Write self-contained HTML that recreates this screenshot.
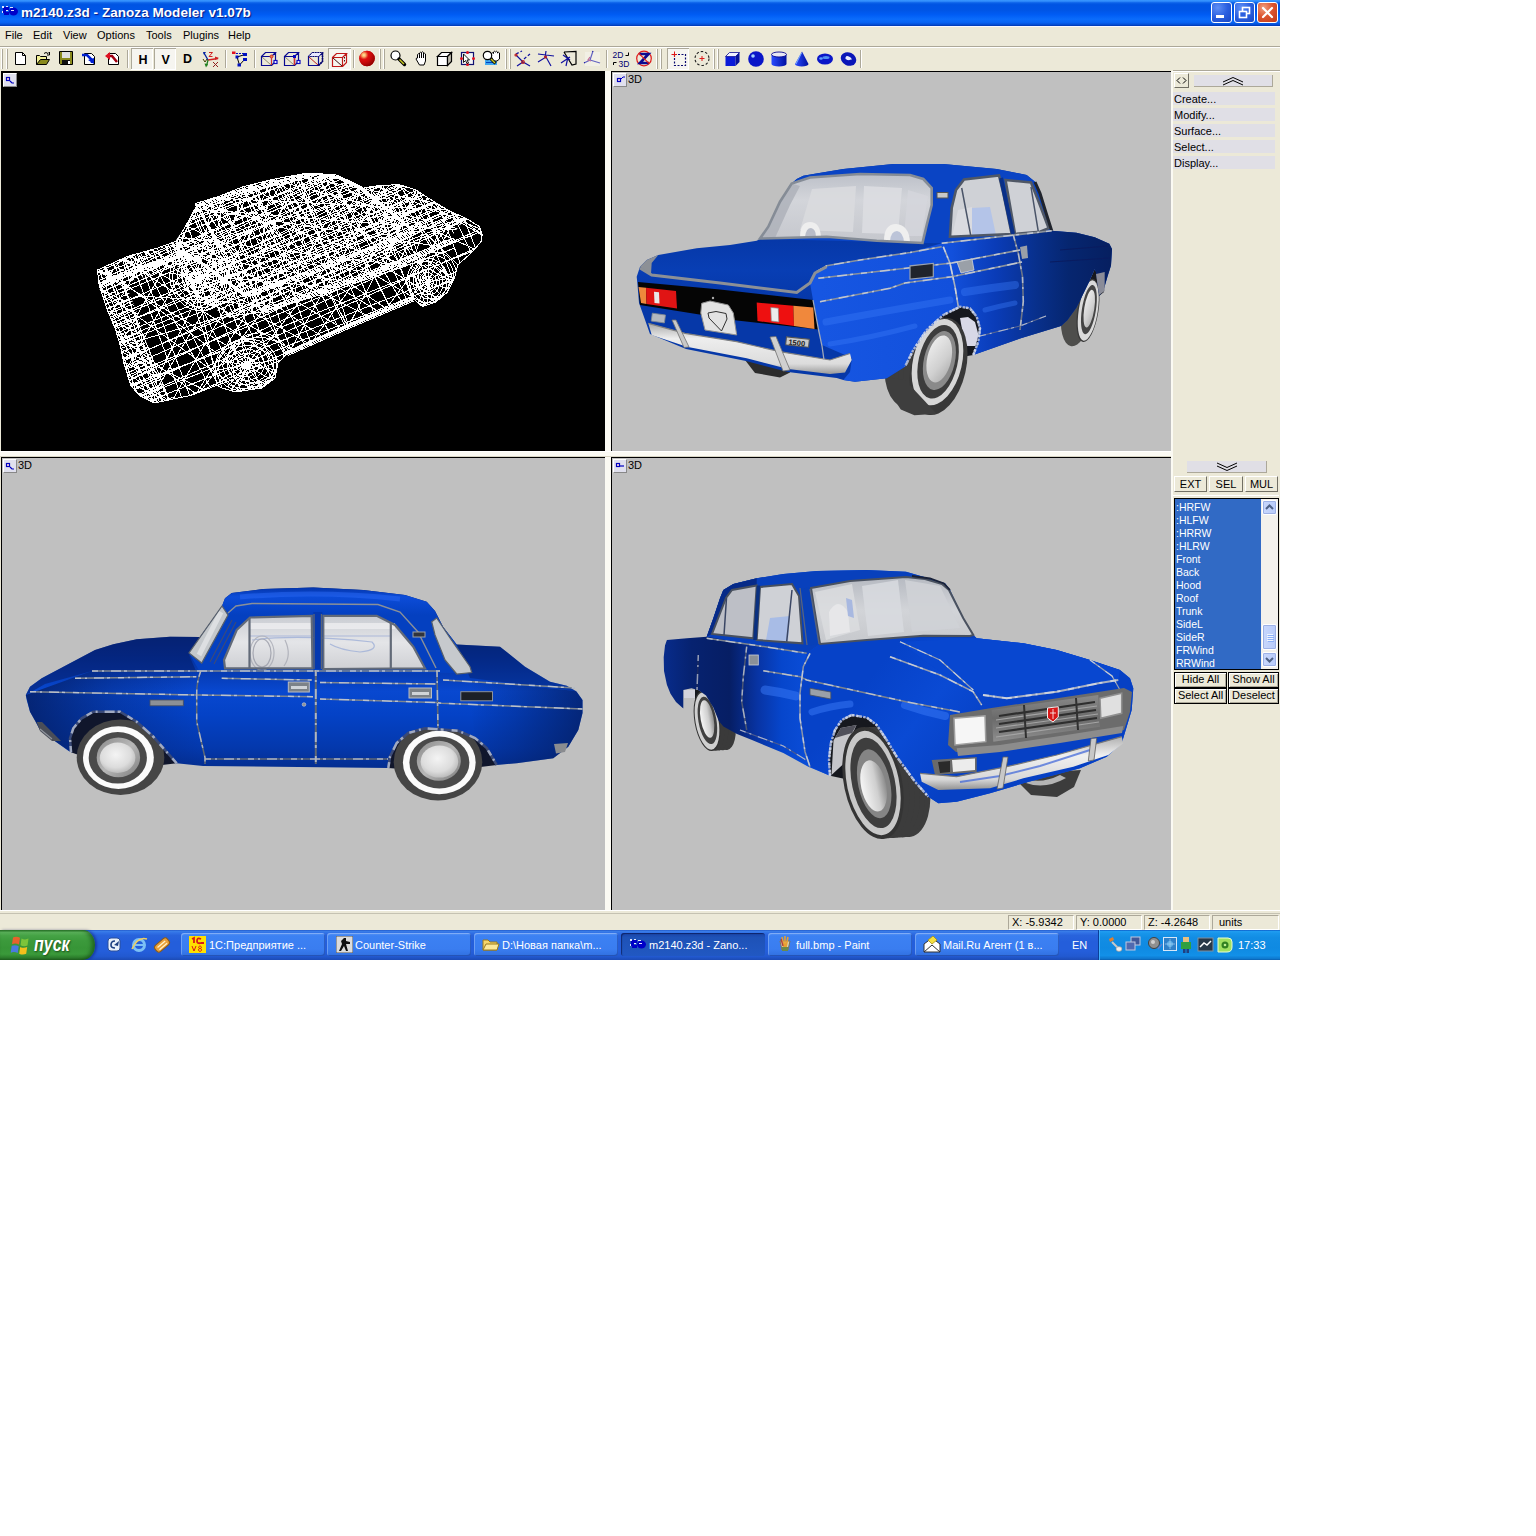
<!DOCTYPE html>
<html><head><meta charset="utf-8"><title>m2140.z3d - Zanoza Modeler v1.07b</title>
<style>
html,body{margin:0;padding:0;background:#fff;}
body{width:1536px;height:1536px;position:relative;overflow:hidden;font-family:"Liberation Sans",sans-serif;font-size:11px;color:#000;}
#win{position:absolute;left:0;top:0;width:1280px;height:960px;background:#ece9d8;overflow:hidden;}
.abs{position:absolute;}
#title{position:absolute;left:0;top:0;width:1280px;height:26px;background:linear-gradient(180deg,#3a98ff 0%,#2f8afa 5%,#0a60e8 11%,#0054e3 18%,#0055e6 40%,#005cf4 56%,#0a6cfc 74%,#0864f4 86%,#0450d8 94%,#0036b0 100%);}
#title .t{position:absolute;left:21px;top:5px;font-family:"Liberation Sans",sans-serif;font-weight:bold;font-size:13.5px;line-height:16px;color:#fff;text-shadow:1px 1px 1px #0a1883;white-space:nowrap;letter-spacing:0.05px;}
.cb{position:absolute;top:2px;width:19px;height:19px;border:1px solid #fff;border-radius:3px;background:radial-gradient(circle at 30% 25%,#5e8ff5 0%,#2a5fe0 50%,#1847c4 100%);}
.cb.x{background:radial-gradient(circle at 30% 25%,#f0a080 0%,#dd5530 45%,#c03a18 100%);}
#menu{position:absolute;left:0;top:26px;width:1280px;height:20px;background:#ece9d8;}
#menu span{position:absolute;top:3px;font-size:11px;white-space:nowrap;}
.vp{position:absolute;background:#c0c0c0;border-left:1px solid #000;border-top:1px solid #000;box-sizing:border-box;overflow:hidden;}
.vpb{position:absolute;width:14px;height:14px;background:#e0e0ee;border-top:1px solid #fff;border-left:1px solid #fff;border-right:1px solid #888;border-bottom:1px solid #888;box-sizing:border-box;}
.lbl3d{position:absolute;font-size:11px;line-height:11px;}
.pitem{position:absolute;left:1173px;width:102px;height:13px;background:#e0dfe6;font-size:11px;line-height:14px;padding-left:1px;box-sizing:border-box;}
.btn{position:absolute;height:16px;box-sizing:border-box;border:1px solid;border-color:#fff #716f64 #716f64 #fff;background:#ece9d8;font-size:11px;line-height:14px;text-align:center;}
.btn2{position:absolute;height:16px;box-sizing:border-box;border:1px solid #000;background:#ece9d8;font-size:11px;line-height:13px;text-align:center;box-shadow:inset 1px 1px 0 #fff,inset -1px -1px 0 #aca899;}
.li{position:absolute;left:1px;color:#fff;font-size:10.5px;line-height:13px;white-space:nowrap;}
.sp{position:absolute;top:915px;height:15px;box-sizing:border-box;border:1px solid;border-color:#aca899 #fff #fff #aca899;font-size:11px;line-height:13px;padding-left:3px;}
#task{position:absolute;left:0;top:930px;width:1280px;height:30px;background:linear-gradient(180deg,#1f56c8 0%,#3a7ee8 4%,#3272e6 9%,#2863dc 18%,#245edb 40%,#245edb 70%,#2259d0 88%,#1c4bb5 100%);}
.tb{position:absolute;top:3px;height:23px;width:144px;border-radius:3px;background:linear-gradient(180deg,#5a95f5 0%,#3c81f3 12%,#3a7df0 70%,#3070e0 100%);box-shadow:inset 1px 1px 0 rgba(255,255,255,.25),inset -1px -1px 0 rgba(0,0,60,.25);color:#fff;font-size:11px;line-height:23px;white-space:nowrap;overflow:hidden;}
.tb span{position:absolute;left:28px;top:1px;}
.tb.act{background:linear-gradient(180deg,#1a44a8 0%,#1e52b7 20%,#2158c2 100%);box-shadow:inset 1px 1px 1px rgba(0,0,40,.5);}
</style></head><body>
<div id="win">
<div id="title">
<svg class="abs" style="left:2px;top:5px" width="17" height="14" viewBox="0 0 17 14"><g fill="#0000c8"><rect x="1" y="2" width="6" height="3"/><rect x="1" y="4" width="3" height="4"/><rect x="2" y="7" width="5" height="3"/><ellipse cx="11.5" cy="6.5" rx="4.5" ry="4"/></g><g fill="#dfe6ff"><rect x="0" y="1" width="2" height="2"/><rect x="4" y="1" width="2" height="1"/><rect x="0" y="6" width="1" height="2"/><rect x="8" y="2" width="3" height="1"/><rect x="9" y="5" width="3" height="1"/><rect x="4" y="5" width="2" height="1"/></g></svg>
<div class="t">m2140.z3d - Zanoza Modeler v1.07b</div>
<div class="cb" style="left:1211px"><div class="abs" style="left:4px;top:12px;width:8px;height:3px;background:#fff"></div></div>
<div class="cb" style="left:1234px"><svg class="abs" style="left:0;top:0" width="19" height="19"><rect x="7.5" y="4.5" width="7" height="6" fill="none" stroke="#fff" stroke-width="1.6"/><rect x="4.5" y="8.5" width="7" height="6" fill="#2a5fe0" stroke="#fff" stroke-width="1.6"/></svg></div>
<div class="cb x" style="left:1257px"><svg class="abs" style="left:0;top:0" width="19" height="19"><path d="M5 5 L14 14 M14 5 L5 14" stroke="#fff" stroke-width="2.2" stroke-linecap="round"/></svg></div>
</div>
<div id="menu">
<span style="left:5px">File</span><span style="left:33px">Edit</span><span style="left:63px">View</span><span style="left:97px">Options</span><span style="left:146px">Tools</span><span style="left:183px">Plugins</span><span style="left:228px">Help</span>
</div>
<div class="abs" style="left:0;top:46px;width:1280px;height:1px;background:#aca899"></div>
<div class="abs" style="left:0;top:47px;width:1280px;height:1px;background:#fff"></div>
<!-- viewports -->
<div class="abs" style="left:605px;top:71px;width:6px;height:840px;background:#fbfaf3"></div>
<div class="abs" style="left:0;top:451px;width:1172px;height:6px;background:#fbfaf3"></div>
<div class="abs" style="left:0;top:451px;width:1172px;height:1px;background:#fff"></div>
<div class="abs" style="left:0;top:456px;width:1172px;height:1px;background:#d8d5c4"></div>
<div class="abs" style="left:1171px;top:71px;width:2px;height:840px;background:#fbfaf3"></div>
<div class="abs" style="left:1px;top:71px;width:604px;height:380px;background:#000"></div>
<div class="vp" style="left:611px;top:71px;width:560px;height:380px"></div>
<div class="vp" style="left:1px;top:457px;width:604px;height:453px"></div>
<div class="vp" style="left:611px;top:457px;width:560px;height:453px"></div>
<div class="vpb" style="left:3px;top:73px"><svg width="12" height="12" class="abs" style="left:0;top:0"><rect x="2.5" y="3.5" width="3" height="3" fill="#fdd" stroke="#0000c0" stroke-width="1.2"/><path d="M6 7 L8 9 H10" stroke="#0000c0" stroke-width="1.2" fill="none"/></svg></div>
<div class="vpb" style="left:613px;top:73px"><svg width="12" height="12" class="abs" style="left:0;top:0"><rect x="3.5" y="4.5" width="3" height="3" fill="#fdd" stroke="#0000c0" stroke-width="1.2"/><path d="M7 5 L9 3 H11" stroke="#0000c0" stroke-width="1" fill="none"/></svg></div>
<div class="lbl3d" style="left:628px;top:74px">3D</div>
<div class="vpb" style="left:3px;top:459px"><svg width="12" height="12" class="abs" style="left:0;top:0"><rect x="2.5" y="3.5" width="3" height="3" fill="#fdd" stroke="#0000c0" stroke-width="1.2"/><path d="M6 7 L8 9 H10" stroke="#0000c0" stroke-width="1.2" fill="none"/></svg></div>
<div class="lbl3d" style="left:18px;top:460px">3D</div>
<div class="vpb" style="left:613px;top:459px"><svg width="12" height="12" class="abs" style="left:0;top:0"><rect x="2.5" y="3.5" width="3" height="3" fill="#fdd" stroke="#0000c0" stroke-width="1.2"/><path d="M6 6 H10" stroke="#0000c0" stroke-width="1.2" fill="none"/></svg></div>
<div class="lbl3d" style="left:628px;top:460px">3D</div>
<!-- bottom -->
<div class="abs" style="left:0;top:910px;width:1280px;height:1px;background:#fff"></div>
<div class="abs" style="left:0;top:913px;width:1280px;height:1px;background:#c5c2b2"></div>
<div class="sp" style="left:1008px;width:66px">X: -5.9342</div>
<div class="sp" style="left:1076px;width:66px">Y: 0.0000</div>
<div class="sp" style="left:1144px;width:66px">Z: -4.2648</div>
<div class="sp" style="left:1212px;width:67px;padding-left:6px">units</div>
<div class="abs" style="left:0;top:26px;width:1280px;height:1px;background:#f8f8ff"></div>
<!-- toolbar -->
<svg class="abs" style="left:0;top:47px" width="870" height="24" viewBox="0 47 870 24" shape-rendering="crispEdges">
<g stroke-width="1">
<!-- grippers & separators -->
<path d="M1.500 49 V69 M6.500 49 V69" stroke="#fff"/><path d="M2.500 49 V69 M7.500 49 V69" stroke="#aca899"/>
<path d="M127.500 50 V68 M225.500 50 V68 M254.500 50 V68 M353.500 50 V68 M971.500 50 V68" stroke="#aca899"/><path d="M128.500 50 V68 M226.500 50 V68 M255.500 50 V68 M354.500 50 V68" stroke="#fff"/>
<path d="M380.500 49 V69 M384.500 49 V69 M506.500 49 V69 M510.500 49 V69 M657.500 49 V69 M661.500 49 V69 M714.500 49 V69 M718.500 49 V69" stroke="#aca899"/><path d="M379.500 49 V69 M383.500 49 V69 M505.500 49 V69 M509.500 49 V69 M656.500 49 V69 M660.500 49 V69 M713.500 49 V69 M717.500 49 V69" stroke="#fff"/>
<path d="M606.500 50 V68 M860.500 50 V68" stroke="#aca899"/><path d="M607.500 50 V68 M861.500 50 V68" stroke="#fff"/>
<!-- pressed buttons -->
<g fill="#f6f5f0"><rect x="131" y="48" width="22" height="22"/><rect x="154" y="48" width="22" height="22"/><rect x="328" y="48" width="23" height="22"/><rect x="667" y="48" width="22" height="22"/></g>
<path d="M131.500 70 V48.500 H153 M154.500 70 V48.500 H176 M328.500 70 V48.500 H351 M667.500 70 V48.500 H689" stroke="#aca899" fill="none"/>
<path d="M131 69.500 H152.500 V49 M154 69.500 H175.500 V49 M328 69.500 H350.500 V49 M667 69.500 H688.500 V49" stroke="#fff" fill="none"/>
</g>
<g shape-rendering="auto">
<!-- new -->
<path d="M15.500 52.500 H22.500 L25.500 55.500 V64.500 H15.500 Z" fill="#fff" stroke="#000"/><path d="M22.500 52.500 V55.500 H25.500" fill="none" stroke="#000"/>
<!-- open -->
<path d="M36.500 64.500 V55.500 H39.500 L40.500 56.500 H46.500 V59.500" fill="#f1ef96" stroke="#000"/><path d="M36.500 64.500 L40.500 59.500 H49.500 L46.500 64.500 Z" fill="#8a8a1e" stroke="#000"/><path d="M44 53.500 Q46 51.500 48 53.500 L49.500 52 M49.500 52 V55 H47" fill="none" stroke="#000"/>
<!-- save -->
<path d="M59.500 51.500 H72.500 V64.500 H60.500 L59.500 63.500 Z" fill="#8a8a1e" stroke="#000"/><rect x="62" y="52" width="8" height="6" fill="#e0e0e0"/><rect x="62" y="60" width="8" height="4" fill="#111"/><rect x="68" y="61" width="2" height="3" fill="#fff"/>
<!-- import -->
<path d="M84.500 53.500 H91.500 L94.500 56.500 V64.500 H84.500 Z" fill="#fff" stroke="#000"/><path d="M82 55 H87 L92 60 V63" fill="none" stroke="#0020d0" stroke-width="2.600"/><path d="M88 60 L94 64 V58 Z" fill="#0020d0"/>
<!-- export -->
<path d="M108.500 53.500 H115.500 L118.500 56.500 V64.500 H108.500 Z" fill="#fff" stroke="#000"/><path d="M117 62 L112 56 H108" fill="none" stroke="#a00010" stroke-width="2.600"/><path d="M105 56 L110 52 V60 Z" fill="#e01020"/>
<!-- H V D -->
<text x="138.500" y="64" font-family="Liberation Sans,sans-serif" font-weight="bold" font-size="12.500">H</text>
<text x="161.500" y="64" font-family="Liberation Sans,sans-serif" font-weight="bold" font-size="12.500">V</text>
<text x="183" y="63" font-family="Liberation Sans,sans-serif" font-weight="bold" font-size="12.500">D</text>
<!-- axes -->
<path d="M208 60 L204 53" stroke="#0020a0" stroke-width="1.300"/><path d="M203 52 l3 0 l-2 3z" fill="#0020a0"/>
<path d="M208 60 L218 58.500" stroke="#d02020" stroke-width="1.300"/><path d="M219 58 l-4 -1.500 l0 3.500z" fill="#d02020"/>
<path d="M208 60 L206.500 66" stroke="#208020" stroke-width="1.300"/><path d="M206 67.500 l-1.500 -4 l3.500 0.500z" fill="#208020"/>
<path d="M209 52.500 h3.500 l-3.500 4 h3.500" stroke="#d02020" fill="none" stroke-width="1"/><path d="M203 59 l2 3 l2 -3" stroke="#404000" fill="none"/><path d="M213 62 l5 5 M218 62 l-5 5" stroke="#902020"/>
<!-- select icon -->
<rect x="232" y="51.500" width="3.500" height="2.500" fill="#e01020"/><path d="M236 53.500 H243" stroke="#0010c0" stroke-dasharray="2 1"/>
<path d="M237 57 L245 54.500 M237 57 L239.500 65 M239.500 65 L245 59" stroke="#000" fill="none"/>
<g fill="#0010c0"><rect x="243" y="53" width="4" height="3"/><rect x="235.500" y="55.500" width="3" height="3"/><rect x="243" y="58" width="4" height="3"/><rect x="237.500" y="63.500" width="3.500" height="3"/></g>
<!-- cubes -->
<g fill="none" stroke="#0a0a90" stroke-width="1.200">
<path d="M261.500 56.500 H271.500 V65.500 H261.500 Z M261.500 56.500 L265.500 52.500 H275.500 L271.500 56.500 M275.500 52.500 V61.500 L271.500 65.500"/>
<path d="M284.500 56.500 H294.500 V65.500 H284.500 Z M284.500 56.500 L288.500 52.500 H298.500 L294.500 56.500 M298.500 52.500 V61.500 L294.500 65.500"/>
<path d="M308.500 56.500 H318.500 V65.500 H308.500 Z M308.500 56.500 L312.500 52.500 H322.500 L318.500 56.500 M322.500 52.500 V61.500 L318.500 65.500" stroke-dasharray="none"/>
</g>
<path d="M262 57 L271 65" stroke="#909070"/><path d="M285 57 L294 65" stroke="#909070"/>
<path d="M271.500 56.500 V65" stroke="#d03030"/><circle cx="271.500" cy="56.500" r="1.500" fill="#f08040" stroke="#d03030"/><rect x="274" y="60.500" width="3" height="3" fill="#fff" stroke="#0a0ac0" stroke-width="1.200"/>
<path d="M294.500 56.500 V65" stroke="#d03030" stroke-width="1.500"/><rect x="293" y="55" width="3" height="3" fill="#0a0ac0"/><rect x="297" y="60.500" width="3" height="3" fill="#fff" stroke="#0a0ac0" stroke-width="1.200"/>
<path d="M309 57 L318 65" stroke="#c02020"/><path d="M312.500 52.500 H322.500 L318.500 56.500 H308.500 Z" fill="#e8e8ff" stroke="#0a0a60" stroke-dasharray="1.500 1"/><path d="M322.500 53 V61.500 L318.500 65.500" stroke="#0a0a60" stroke-width="1.600" stroke-dasharray="1.500 1" fill="none"/>
<g fill="none" stroke="#c01818" stroke-width="1.200"><path d="M332.500 57.500 H342.500 V66.500 H332.500 Z M332.500 57.500 L336.500 53.500 H346.500 L342.500 57.500 M346.500 53.500 V62.500 L342.500 66.500"/></g><path d="M333 58 L342 66" stroke="#401010"/><path d="M344.500 57 V63" stroke="#401010" stroke-dasharray="1.500 1.500"/>
<!-- red sphere -->
<circle cx="367" cy="58.500" r="7.800" fill="#d80808"/><circle cx="367" cy="58.500" r="7.800" fill="url(#rs)"/>
<defs><radialGradient id="rs" cx="0.300" cy="0.280" r="0.750"><stop offset="0" stop-color="#fff0a0"/><stop offset="0.180" stop-color="#f8a060"/><stop offset="0.400" stop-color="#e01010" stop-opacity="0.600"/><stop offset="1" stop-color="#900000"/></radialGradient>
<linearGradient id="bl" x1="0" x2="1"><stop offset="0" stop-color="#2a4cff"/><stop offset="1" stop-color="#0010a0"/></linearGradient></defs>
<!-- zoom -->
<circle cx="395.500" cy="55.500" r="4.500" fill="#fff" stroke="#000" stroke-width="1.200"/><path d="M399 59 L404.500 64.500" stroke="#000" stroke-width="3.400" stroke-linecap="round"/><path d="M399.500 59.500 L404 64" stroke="#c8c820" stroke-width="1.500"/>
<!-- hand -->
<path d="M417.500 58 V54.500 q1 -1.500 2 0 V53 q1 -1.500 2 0 V52.500 q1 -1.500 2 0 V54 q1 -1.500 2 0 V61 L424 65 H419.500 L416 59 q1 -2 1.500 -1 z" fill="#fff" stroke="#000" stroke-width="1"/><path d="M419.500 54.500 V58 M421.500 53 V58 M423.500 53.500 V58" stroke="#000"/>
<!-- white box -->
<path d="M437.500 56.500 H447.500 V65.500 H437.500 Z" fill="#fff" stroke="#000" stroke-width="1.200"/><path d="M437.500 56.500 L441.500 52.500 H451.500 L447.500 56.500 Z" fill="#fff" stroke="#000" stroke-width="1.200"/><path d="M451.500 52.500 V61.500 L447.500 65.500 V56.500 Z" fill="#c0bcae" stroke="#000" stroke-width="1.200"/>
<!-- select region -->
<rect x="461.500" y="52.500" width="12" height="12" fill="#f4f4f4" stroke="#101070" stroke-width="1.200"/><g fill="#e01020"><circle cx="467.500" cy="52.500" r="1.500"/><circle cx="467.500" cy="64.500" r="1.500"/><circle cx="461.500" cy="58.500" r="1.500"/><circle cx="473.500" cy="58.500" r="1.500"/></g><path d="M463.500 54 V62.500 L465.500 60.500 L467 63.500 L468.500 63 L467 60 H469.500 Z" fill="#fff" stroke="#000" stroke-width=".9"/>
<!-- zoom+hand -->
<rect x="485" y="60" width="12" height="5" fill="#40a8f0"/><path d="M486 62.500 H496" stroke="#0040c0"/>
<path d="M491.500 57 V53.500 q1 -1.500 2 0 V52 q1 -1.500 2 0 V52 q1 -1.500 2 0 V53 q1 -1.500 2 0 V59 L497 61 H493.500 z" fill="#fff" stroke="#000" stroke-width="1"/>
<circle cx="487.500" cy="55.500" r="4.200" fill="#fff" stroke="#000" stroke-width="1.200"/><path d="M490.500 58.500 L495.500 63.500" stroke="#000" stroke-width="3"/><path d="M491 59 L495 63" stroke="#c8c820" stroke-width="1.400"/>
<!-- axis icons -->
<g fill="none" stroke-width="1.200">
<path d="M516 55 L523 62 M517 66 L523 62 L530 66" stroke="#1010a0"/><path d="M516 54 L522 51 M524 59 L530 54" stroke="#1010a0" stroke-dasharray="3 2"/><circle cx="523" cy="62" r="1.300" stroke="#c02020"/><circle cx="516" cy="55" r="1" stroke="#c02020"/>
<path d="M538 54 L554 56 M546 51 L545 58 M538 62 L546 57 L551 66" stroke="#1010a0"/><circle cx="545.500" cy="57" r="1" stroke="#c02020"/>
<path d="M564 52 L576 51.500 V64 L572 65 L564 52" stroke="#000"/><path d="M561 63 L570 57 M566 66 L568 57 M563 55 L570 60" stroke="#1010a0"/>
<path d="M593 51 L590 60 L584 63 M590 60 L600 63" stroke="#1010a0"/><path d="M590 57 L588 60 L591 61" stroke="#a02060"/>
</g>
<rect x="585" y="52" width="15" height="14" fill="#fff" opacity=".35"/>
<!-- 2D/3D -->
<text x="612.500" y="58" font-family="Liberation Sans,sans-serif" font-size="8.500" fill="#000070">2D</text><text x="618.500" y="67" font-family="Liberation Sans,sans-serif" font-size="8.500" fill="#000070">3D</text><path d="M625.500 55.500 H628.500 V52.500 M613.500 65 V62.500 H616.500" stroke="#000" fill="none"/>
<!-- Z no -->
<circle cx="644" cy="58.500" r="7.300" fill="none" stroke="#e01818" stroke-width="1.200"/><path d="M639.500 54 H648.500 L640 63 H649" stroke="#0a0a90" stroke-width="2.600" fill="none"/><path d="M638.800 53.300 L649.200 63.700" stroke="#e01818" stroke-width="1.200"/>
<!-- sel rect/circle -->
<rect x="674.500" y="54.500" width="11" height="11" fill="none" stroke="#0a0a70" stroke-width="1.200" stroke-dasharray="2 1.500"/><path d="M671.500 54.500 H677 M674.500 51.500 V57" stroke="#e01818"/>
<circle cx="702" cy="58.500" r="7" fill="none" stroke="#202020" stroke-width="1.100" stroke-dasharray="2.500 2"/><path d="M699.500 58.500 H704.500 M702 56 V61" stroke="#e01818"/>
<!-- primitives -->
<path d="M725.500 56.500 H735.500 V66 H725.500 Z" fill="#0a1ad8"/><path d="M725.500 56.500 L729.500 52.500 H739.500 L735.500 56.500 Z" fill="#f0f0ff" stroke="#0a0a90" stroke-width=".8"/><path d="M739.500 52.500 V62 L735.500 66 V56.500 Z" fill="#06109a"/>
<circle cx="756" cy="59" r="7.800" fill="#0a16c8"/><circle cx="753" cy="56" r="1.800" fill="#a0d0ff"/>
<path d="M771.500 54.500 V64 a7.500 2.500 0 0 0 15 0 V54.500 Z" fill="url(#bl)"/><ellipse cx="779" cy="54.500" rx="7.500" ry="2.500" fill="#e8e8f4" stroke="#0a0a90" stroke-width=".9"/>
<path d="M802 51.500 L808.500 64 a6.500 2.500 0 0 1 -13.500 0 Z" fill="url(#bl)"/><path d="M801.500 53 L796 64" stroke="#80b0ff" stroke-width="1"/>
<ellipse cx="825" cy="59" rx="8" ry="5.500" fill="#0a16c8"/><ellipse cx="826" cy="57.500" rx="3.500" ry="1.500" fill="#5090f0"/><ellipse cx="821" cy="58.500" rx="1.800" ry="1.200" fill="#60a0ff"/>
<ellipse cx="848.500" cy="59" rx="8" ry="6.500" fill="#0a16b8" transform="rotate(25 848.500 59)"/><ellipse cx="848.500" cy="58.500" rx="3.200" ry="2" fill="#e8ecff" transform="rotate(25 848.500 58.500)"/><path d="M846 60 q3 2 5 0" stroke="#0a16b8" stroke-width="1.500" fill="none"/>
</g>
</svg>
<!-- car1: wireframe -->
<svg class="abs" style="left:1px;top:71px" width="604" height="380" viewBox="1 71 604 380">
<defs><clipPath id="c1o"><polygon points="97.6,270.0 127.2,256.5 157.7,248.0 176.3,241.2 184.8,227.7 196.6,205.7 208.5,200.6 242.3,187.0 276.2,178.6 305.4,173.5 330.8,174.4 347.7,180.3 359.5,188.8 373.0,186.2 398.5,184.5 415.4,189.6 432.3,200.6 449.2,210.8 466.2,218.4 479.7,226.8 482.2,234.5 481.4,241.2 472.9,251.4 457.7,264.9 454.3,278.5 447.5,292.0 435.7,302.2 422.2,306.4 413.7,298.8 381.5,312.3 347.7,326.7 313.8,341.0 286.8,353.8 277.9,363.0 275.0,378.0 262.0,388.0 235.6,391.9 222.0,388.0 217.0,385.1 191.6,395.3 154.3,402.9 139.0,395.3 130.6,385.0 123.9,363.1 120.5,346.2 115.4,329.3 107.0,309.0 99.3,285.3 97.6,271.7"/></clipPath><clipPath id="c1c"><polygon points="174.0,243.0 184.8,227.7 196.6,205.7 208.5,200.6 242.3,187.0 276.2,178.6 305.4,173.5 330.8,174.4 347.7,180.3 359.5,188.8 373.0,186.2 398.5,184.5 415.4,189.6 432.3,200.6 449.2,210.8 466.0,218.0 440.0,250.0 400.0,268.0 330.0,292.0 262.0,312.0 230.0,318.0 200.0,300.0 178.0,270.0"/></clipPath><clipPath id="c1f"><polygon points="97.6,270.0 99.3,285.0 107.0,309.0 115.4,329.0 120.5,346.0 124.0,363.0 130.6,385.0 139.0,395.0 154.0,403.0 174.0,399.0 162.0,385.0 152.0,360.0 144.0,335.0 136.0,310.0 126.0,285.0 118.0,262.0"/><polygon points="97.6,270.0 127.0,256.5 158.0,248.0 176.0,241.0 186.0,262.0 150.0,275.0 120.0,285.0 100.0,291.0"/></clipPath></defs>
<g fill="none" stroke="#fff" stroke-width="1" shape-rendering="crispEdges">
<g clip-path="url(#c1o)">
<path d="M-13.4 172.9 L407.5 -25.6 M-9.9 180.9 L409.6 -20.4 M-10.1 180.9 L414.5 -9.7 M-9.3 182.6 L417.5 -2.7 M-6.3 189.6 L419.4 1.6 M-0.8 201.7 L419.0 1.0 M-4.0 194.7 L427.9 21.4 M3.0 210.8 L425.1 15.0 M0.3 204.3 L434.0 35.6 M7.0 220.2 L432.1 30.8 M13.0 233.4 L432.0 31.2 M13.2 234.3 L436.5 41.0 M16.3 241.2 L436.6 41.5 M13.3 234.4 L445.0 60.7 M17.4 244.1 L445.5 61.6 M22.2 254.9 L446.8 64.7 M27.2 266.1 L446.5 64.4 M27.8 267.8 L449.6 71.4 M29.2 271.1 L454.7 82.9 M29.9 272.8 L458.0 90.5 M34.9 284.2 L458.3 91.2 M34.5 283.4 L464.4 105.3 M37.3 289.9 L465.3 107.1 M37.8 290.7 L470.4 119.2 M45.2 307.9 L468.4 114.5 M49.4 317.4 L469.8 117.8 M46.0 309.7 L476.8 133.8 M50.3 319.7 L476.8 133.7 M51.2 321.7 L480.6 142.4 M55.3 331.2 L483.2 148.3 M60.0 342.0 L483.7 149.5 M60.0 341.9 L488.2 159.9 M63.4 349.9 L489.4 162.7 M62.4 347.1 L496.0 178.3 M66.6 357.1 L495.9 177.7 M68.3 360.9 L498.2 182.9 M69.2 362.7 L503.6 195.7 M77.5 382.2 L500.7 188.6 M76.3 379.5 L505.7 200.3 M80.0 388.1 L506.1 201.1 M85.6 400.5 L505.9 200.8 M82.6 393.8 L513.5 218.3 M89.3 409.4 L511.9 214.5 M87.1 404.1 L519.7 232.5 M92.5 416.9 L518.5 229.4 M92.2 415.7 L524.9 244.5 M95.1 422.5 L527.5 250.6 M100.5 435.1 L525.8 246.4 M99.4 432.2 L532.1 261.1 M108.5 453.2 L529.4 254.8 M109.3 455.3 L531.6 259.8 M109.7 456.4 L536.2 270.3 M114.5 467.2 L537.3 272.9 M115.0 468.4 L540.4 279.8 M116.7 472.3 L544.5 289.3 M118.9 477.3 L548.6 298.9 M121.4 483.2 L550.0 302.0 M128.8 499.7 L547.9 297.7 M125.5 492.5 L556.7 317.5 M127.8 497.8 L559.2 323.4 M132.9 509.6 L558.0 320.3 M133.1 510.1 L562.0 329.6 M140.3 526.2 L559.7 324.7 M142.1 530.6 L563.2 332.5 M145.7 538.6 L564.8 336.5 M146.9 541.6 L567.8 343.1 M147.7 543.6 L572.2 353.0 M146.0 539.5 L578.6 368.0 M155.1 560.4 L575.9 361.8 M155.4 561.4 L579.6 370.2 M159.9 571.5 L580.3 372.0 M156.0 562.3 L590.3 395.3 M161.9 576.5 L588.4 390.3 M167.2 588.2 L587.2 387.9 M168.6 591.6 L591.4 397.3 M172.5 600.5 L593.6 402.4"/>
<path d="M430.1 -28.4 L578.5 412.6 M382.3 -7.6 L602.5 402.4 M367.1 -0.3 L597.5 404.0 M399.4 -14.6 L545.2 427.3 M375.2 -4.9 L546.8 427.6 M352.6 5.0 L553.7 424.7 M361.1 1.6 L525.9 436.8 M350.0 6.5 L514.1 442.0 M316.0 21.7 L529.6 435.1 M338.4 12.6 L483.6 454.7 M319.9 20.0 L481.6 456.4 M307.0 25.6 L474.7 459.6 M289.1 33.2 L476.8 459.0 M257.3 48.6 L487.5 453.0 M259.2 46.8 L467.9 462.7 M266.7 43.4 L438.7 475.8 M243.1 53.7 L437.1 476.7 M257.7 48.5 L402.6 490.7 M219.4 64.4 L420.6 483.9 M206.0 70.6 L419.3 484.2 M195.1 75.6 L410.3 488.1 M214.6 67.3 L367.6 506.8 M184.7 79.7 L375.8 504.0 M189.7 78.0 L352.0 514.1 M175.5 84.0 L350.3 515.2 M167.9 87.6 L331.7 523.2 M144.8 97.5 L336.0 521.7 M150.8 95.3 L314.0 531.0 M140.7 99.8 L302.9 536.0 M110.2 112.9 L308.7 533.8 M127.1 106.5 L275.8 547.4 M81.1 126.4 L299.3 537.4 M72.4 130.4 L292.2 540.5 M88.7 123.0 L250.3 559.4 M82.3 125.9 L242.1 562.9 M61.5 134.7 L236.7 565.8 M48.9 140.2 L233.8 567.2 M16.4 156.0 L247.8 559.6 M31.0 148.2 L206.9 579.1 M35.6 147.1 L185.5 587.7 M23.0 152.5 L178.6 591.0 M-18.0 170.4 L196.7 583.3 M-22.4 172.1 L185.2 588.6"/>
<path d="M208.5 -36.5 L605.7 205.8 M195.5 -14.0 L603.6 209.5 M205.6 -28.5 L579.3 248.7 M181.4 10.2 L587.1 238.2 M189.0 0.1 L563.2 276.7 M182.5 11.6 L555.7 289.5 M160.9 45.8 L561.8 282.1 M138.5 88.8 L569.0 265.3 M135.5 91.5 L557.5 287.7 M149.2 67.6 L531.4 333.1 M130.0 99.4 L534.7 329.0 M123.5 110.6 L522.8 349.6 M116.0 123.6 L517.7 358.4 M117.0 123.2 L500.3 387.1 M103.0 146.1 L502.0 385.5 M86.2 176.0 L502.9 383.1 M84.3 178.5 L486.8 412.0 M86.1 176.5 L471.2 437.8 M66.8 208.9 L473.4 435.1 M62.2 216.8 L464.8 450.1 M61.4 218.9 L451.2 472.9 M48.6 240.4 L449.4 476.8 M55.7 231.5 L427.1 511.9 M45.1 249.0 L421.4 522.7 M16.2 297.5 L433.8 502.6 M33.1 270.8 L404.2 551.4 M-1.9 330.2 L422.5 520.9 M1.6 321.7 L408.3 547.8 M-11.8 346.1 L407.0 549.0 M-5.7 334.8 L385.9 586.2 M-6.9 339.3 L367.9 615.1 M-19.2 358.6 L369.0 615.2"/>
<path d="M-14.7 370.7 L201.7 -41.3 M-31.2 359.8 L252.7 -8.8 M-17.9 368.2 L264.9 -1.3 M17.7 391.7 L263.3 -3.6 M22.9 394.3 L296.4 17.8 M51.1 412.5 L292.0 14.4 M72.9 426.0 L306.0 23.3 M88.2 435.6 L319.6 31.9 M119.9 454.2 L325.6 36.8 M117.2 453.8 L358.8 56.2 M135.1 464.9 L367.6 61.8 M146.8 472.3 L394.4 78.4 M141.2 467.4 L426.5 99.9 M161.5 480.2 L445.8 111.8 M202.8 507.0 L429.7 100.8 M197.4 503.5 L466.6 124.0 M241.7 530.8 L457.0 118.3 M226.4 521.1 L506.0 149.2 M271.2 549.7 L497.5 143.2 M256.9 540.1 L537.2 168.7 M283.8 557.8 L546.8 173.8 M324.5 582.2 L533.5 166.5 M327.9 585.5 L568.3 187.1 M320.2 579.6 L602.0 209.2 M344.6 595.4 L615.6 217.1"/>
</g>
<g clip-path="url(#c1c)">
<path d="M89.1 146.6 L412.3 24.8 M91.1 151.2 L414.5 29.7 M98.4 168.5 L412.0 23.6 M95.2 160.4 L419.6 41.7 M104.6 182.2 L413.8 28.2 M105.8 185.1 L417.3 35.9 M108.3 190.6 L418.2 38.1 M109.8 194.4 L420.6 43.6 M111.1 197.5 L424.0 51.2 M113.8 203.6 L426.3 56.6 M116.7 210.2 L427.0 58.4 M120.4 218.1 L427.2 59.4 M122.4 222.7 L429.1 63.9 M119.4 216.9 L437.2 81.4 M121.7 222.1 L438.0 83.3 M128.3 236.6 L437.0 81.6 M126.9 234.0 L442.3 93.3 M125.0 229.1 L447.8 106.3 M129.9 240.9 L446.8 103.5 M128.1 235.7 L453.4 119.6 M131.0 243.1 L453.9 120.2 M135.2 253.1 L454.5 121.4 M139.8 263.5 L453.5 119.1 M143.8 272.3 L453.0 118.4 M139.9 263.6 L461.1 136.6 M147.8 281.5 L457.7 129.1 M143.2 270.9 L466.1 148.4 M147.5 281.3 L467.4 151.1 M153.2 294.2 L464.8 145.1 M153.1 294.2 L469.1 154.7 M155.2 299.0 L470.9 158.9 M152.7 292.4 L477.7 175.4 M159.1 308.1 L476.8 172.4 M156.8 301.9 L481.8 185.0 M164.5 320.4 L478.4 176.3 M166.0 323.9 L480.5 181.0 M167.3 327.0 L484.2 189.4 M169.1 331.2 L486.0 193.6 M173.4 340.8 L485.5 192.7 M174.2 342.8 L489.0 200.6 M180.2 355.6 L487.1 197.1 M180.3 356.4 L491.7 207.0 M179.6 355.3 L497.0 218.9 M180.7 357.6 L500.4 226.9 M180.8 357.3 L504.4 236.5 M187.7 373.7 L501.0 228.3 M192.2 383.6 L501.8 230.5 M189.1 376.9 L508.5 245.6 M188.8 375.9 L511.7 253.1 M193.5 387.2 L512.7 255.1 M193.8 387.5 L516.3 263.7 M197.9 397.4 L515.1 260.7 M197.5 396.0 L520.4 273.2 M200.0 401.6 L522.7 278.5 M201.3 404.4 L525.1 284.2 M205.2 413.9 L525.5 284.7 M213.5 432.2 L520.5 274.0 M212.0 429.6 L526.0 285.7 M209.6 423.7 L532.5 301.0 M213.9 434.1 L533.1 302.1 M215.6 437.9 L535.7 308.2 M224.4 457.2 L530.8 297.8 M219.3 446.3 L540.6 319.6 M223.0 455.1 L540.5 319.0 M230.1 470.5 L537.9 313.8 M230.2 471.4 L542.0 322.8 M231.5 474.4 L543.6 326.4"/>
<path d="M378.3 19.0 L565.0 309.7 M403.5 6.7 L523.9 330.5 M370.6 22.6 L542.7 322.1 M375.6 20.1 L521.9 333.0 M363.7 26.3 L515.8 336.4 M333.8 43.4 L530.7 327.2 M334.7 42.0 L517.4 335.2 M326.7 46.1 L505.3 341.8 M307.7 57.8 L509.7 337.9 M311.8 54.2 L493.3 348.1 M319.6 49.9 L465.2 363.1 M294.6 63.2 L474.3 358.2 M294.5 63.0 L459.7 366.3 M272.5 75.8 L466.1 361.8 M266.3 78.7 L453.4 369.0 M289.7 67.0 L413.6 389.4 M264.2 79.1 L429.9 382.2 M275.8 74.6 L396.8 398.1 M238.9 92.9 L420.4 386.8 M261.0 82.3 L384.1 405.0 M237.0 93.6 L392.2 402.2 M226.8 98.9 L386.9 405.0 M199.8 114.3 L392.3 401.1 M207.9 109.0 L369.3 414.4 M208.1 109.2 L352.7 422.9 M211.1 108.5 L338.5 429.6 M165.4 133.3 L366.5 414.2 M178.3 124.8 L341.1 429.4 M160.8 134.4 L339.5 429.9 M155.7 137.0 L331.0 434.6 M168.5 130.8 L301.0 449.8 M157.7 136.2 L298.1 451.8 M120.2 156.7 L313.8 442.8 M136.9 147.1 L280.6 461.2 M111.0 160.9 L290.8 455.8 M109.2 161.6 L280.4 461.6 M107.4 162.5 L261.9 471.4 M94.8 169.2 L263.1 470.8 M71.7 183.0 L270.9 465.1"/>
<path d="M192.8 18.4 L520.0 129.1 M192.1 25.5 L515.2 147.6 M179.9 76.1 L522.5 120.1 M176.6 93.9 L520.2 128.8 M185.0 60.0 L507.2 184.5 M178.9 83.0 L507.0 191.1 M178.8 87.4 L502.8 207.1 M169.6 122.0 L506.2 199.6 M163.2 162.3 L508.1 180.3 M163.6 150.1 L502.7 216.1 M163.7 150.6 L497.5 239.3 M156.3 195.0 L501.2 212.9 M153.3 205.7 L497.6 233.1 M152.9 201.9 L494.1 255.1 M155.9 189.3 L486.6 289.1 M146.5 233.3 L489.2 276.6 M144.8 240.7 L486.8 288.9 M143.3 246.3 L483.6 305.6 M139.4 269.6 L483.4 301.1 M146.7 238.0 L471.0 356.8 M134.4 291.6 L477.6 330.1 M142.8 260.4 L463.2 389.4 M129.0 319.6 L473.2 348.4 M126.6 332.7 L471.2 355.7 M123.9 345.3 L468.5 368.4 M122.5 346.4 L465.2 389.5 M128.4 323.3 L453.5 440.0 M118.3 363.7 L458.2 425.2 M117.5 366.9 L454.8 441.6"/>
<path d="M111.0 358.4 L199.1 24.4 M126.1 363.0 L207.0 27.2 M153.5 371.0 L216.6 31.3 M135.0 366.3 L256.5 42.9 M174.2 378.3 L247.9 40.9 M182.3 381.1 L259.8 44.5 M184.8 382.6 L285.3 52.2 M178.6 379.3 L324.5 66.2 M239.1 397.8 L289.7 56.1 M207.7 389.6 L338.1 69.8 M239.3 400.4 L343.0 70.9 M278.7 410.4 L326.8 68.4 M237.7 397.9 L392.1 88.8 M257.4 404.9 L404.0 92.1 M306.1 421.4 L383.6 84.8 M320.0 425.3 L386.5 86.3 M305.2 421.4 L432.6 100.4 M318.7 425.6 L450.5 106.4 M328.0 428.4 L464.6 111.2 M352.2 437.0 L464.8 110.5 M350.1 435.5 L488.7 119.1 M357.0 436.7 L510.6 127.3 M407.5 454.6 L491.5 119.6 M420.9 458.7 L498.8 122.2 M411.5 455.9 L540.7 135.6"/>
</g>
<g clip-path="url(#c1f)">
<path d="M12.3 274.1 L192.3 186.0 M11.9 273.5 L196.4 195.2 M15.0 280.4 L196.4 195.2 M17.7 286.4 L197.1 197.2 M17.1 285.3 L200.5 204.7 M18.3 288.2 L203.3 211.1 M20.6 293.4 L204.1 213.0 M22.7 298.3 L204.3 213.5 M22.9 298.6 L208.3 222.7 M27.0 307.8 L206.6 218.8 M25.9 305.6 L211.1 229.0 M29.2 313.1 L210.9 228.6 M28.2 310.7 L215.4 239.1 M33.3 322.3 L212.9 233.5 M33.2 322.4 L216.3 241.0 M36.0 328.7 L217.2 243.1 M35.4 327.4 L221.1 252.1 M39.1 335.8 L220.3 250.2 M40.5 339.1 L222.6 255.6 M42.3 343.3 L223.8 258.3 M41.3 341.0 L227.2 266.1 M42.2 342.9 L229.6 271.8 M47.1 354.2 L228.2 268.4 M47.5 355.3 L230.6 273.8 M47.3 354.5 L234.6 283.3 M50.8 362.8 L233.6 280.8 M50.1 360.9 L237.6 290.2 M55.5 373.4 L235.3 284.9 M55.5 373.7 L238.4 291.7 M55.6 373.8 L242.5 301.3 M56.7 376.1 L244.4 305.9 M61.1 386.6 L243.4 303.4 M59.8 383.3 L247.0 311.8 M65.5 396.4 L245.2 307.6 M65.5 396.7 L248.3 314.5 M67.1 400.4 L249.5 317.2 M70.1 406.9 L249.4 317.5 M70.2 407.4 L252.7 324.6 M73.2 414.2 L253.7 327.1 M74.4 417.1 L255.7 331.6 M73.1 414.0 L259.4 340.3 M76.5 422.1 L259.7 340.9 M77.5 424.2 L261.0 343.8 M77.5 424.0 L264.6 352.3 M81.2 432.8 L263.8 350.3 M84.8 440.7 L264.4 351.8 M82.7 436.2 L269.0 362.3 M87.8 447.7 L267.5 359.1 M88.8 450.1 L268.8 361.9 M90.1 453.3 L271.8 368.7 M89.0 450.5 L275.9 378.3"/>
<path d="M195.2 193.2 L276.2 376.5 M193.9 193.7 L265.9 380.7 M191.9 194.5 L261.3 382.5 M181.4 198.8 L262.3 382.1 M183.6 197.9 L252.0 386.3 M175.7 201.1 L247.2 388.2 M163.1 206.3 L250.4 386.7 M165.6 205.1 L241.3 390.6 M165.9 205.2 L229.0 395.4 M153.1 210.2 L234.6 393.3 M151.6 210.8 L226.8 396.5 M142.0 214.7 L225.2 397.0 M144.8 213.6 L213.6 401.8 M140.6 215.3 L208.5 403.8 M130.5 219.3 L210.1 403.2 M126.9 220.8 L205.5 405.1 M117.8 224.6 L203.6 405.7 M122.9 222.4 L191.4 410.7 M109.3 228.0 L195.5 408.9 M111.3 227.0 L185.0 413.4 M111.8 227.1 L174.2 417.5 M106.2 229.3 L168.5 419.8 M91.0 235.4 L176.7 416.6 M92.0 234.8 L167.1 420.6 M85.5 237.5 L162.0 422.7 M81.4 239.1 L158.6 424.1 M79.4 240.0 L149.9 427.5 M76.8 241.1 L142.8 430.3 M62.9 246.7 L147.7 428.3 M60.1 247.8 L140.5 431.3 M57.0 249.0 L135.4 433.4 M49.8 252.0 L132.6 434.5 M46.7 253.2 L128.3 436.2 M50.6 251.7 L115.6 441.3 M37.9 256.7 L117.4 440.7 M42.3 255.2 L104.4 445.7 M27.5 261.0 L109.5 443.8 M27.8 260.8 L98.8 448.2 M15.7 265.8 L101.0 447.2 M21.3 263.5 L88.0 452.5 M17.2 265.2 L81.4 455.1"/>
<path d="M103.5 189.9 L282.6 279.9 M98.2 199.6 L279.8 284.4 M98.5 198.3 L269.7 302.5 M91.7 210.3 L268.7 304.2 M88.8 215.2 L263.7 312.9 M90.2 213.3 L255.5 326.6 M76.4 237.8 L259.9 318.3 M79.5 231.4 L249.5 337.4 M72.3 243.8 L249.4 337.5 M66.3 254.7 L247.6 340.2 M67.5 252.1 L238.2 357.1 M57.8 269.5 L239.1 354.9 M56.0 272.2 L234.2 363.9 M49.6 283.8 L231.3 368.4 M46.2 289.6 L227.4 375.1 M46.2 288.9 L218.4 391.4 M37.2 305.7 L220.8 386.0 M38.6 302.0 L210.8 404.6 M28.5 320.8 L212.4 400.6 M33.0 312.0 L200.8 421.5 M23.0 329.4 L202.3 418.9 M29.0 320.2 L188.5 441.5 M19.0 336.1 L190.6 439.5 M12.8 346.8 L188.7 442.9 M17.2 341.0 L175.2 464.2 M2.0 366.1 L183.4 451.3"/>
</g>
<g clip-path="url(#c1o)">
<ellipse cx="246.0" cy="365.0" rx="31.0" ry="26.0" transform="rotate(-10 246.0 365.0)"/><ellipse cx="246.0" cy="365.0" rx="27.9" ry="23.4" transform="rotate(-10 246.0 365.0)"/><ellipse cx="246.0" cy="365.0" rx="23.2" ry="19.5" transform="rotate(-10 246.0 365.0)"/><ellipse cx="246.0" cy="365.0" rx="18.6" ry="15.6" transform="rotate(-10 246.0 365.0)"/><ellipse cx="246.0" cy="365.0" rx="14.0" ry="11.7" transform="rotate(-10 246.0 365.0)"/><ellipse cx="246.0" cy="365.0" rx="9.3" ry="7.8" transform="rotate(-10 246.0 365.0)"/><ellipse cx="246.0" cy="365.0" rx="4.6" ry="3.9" transform="rotate(-10 246.0 365.0)"/><path d="M246.0 365.0 L276.5 359.6 M246.0 365.0 L275.9 369.8 M246.0 365.0 L270.8 379.3 M246.0 365.0 L261.9 386.6 M246.0 365.0 L250.5 390.6 M246.0 365.0 L238.5 390.7 M246.0 365.0 L227.6 386.9 M246.0 365.0 L219.5 379.8 M246.0 365.0 L215.5 370.4 M246.0 365.0 L216.1 360.2 M246.0 365.0 L221.2 350.7 M246.0 365.0 L230.1 343.4 M246.0 365.0 L241.5 339.4 M246.0 365.0 L253.5 339.3 M246.0 365.0 L264.4 343.1 M246.0 365.0 L272.5 350.2"/>
<ellipse cx="258.0" cy="360.0" rx="31.0" ry="27.0" transform="rotate(-10 258.0 360.0)"/><ellipse cx="258.0" cy="360.0" rx="26.3" ry="22.9" transform="rotate(-10 258.0 360.0)"/><path d=""/>
<ellipse cx="200.0" cy="278.0" rx="30.0" ry="33.0" transform="rotate(-15 200.0 278.0)"/><ellipse cx="200.0" cy="278.0" rx="27.0" ry="29.7" transform="rotate(-15 200.0 278.0)"/><ellipse cx="200.0" cy="278.0" rx="22.5" ry="24.8" transform="rotate(-15 200.0 278.0)"/><ellipse cx="200.0" cy="278.0" rx="18.0" ry="19.8" transform="rotate(-15 200.0 278.0)"/><ellipse cx="200.0" cy="278.0" rx="13.5" ry="14.8" transform="rotate(-15 200.0 278.0)"/><ellipse cx="200.0" cy="278.0" rx="9.0" ry="9.9" transform="rotate(-15 200.0 278.0)"/><path d="M200.0 278.0 L229.0 270.2 M200.0 278.0 L230.0 283.0 M200.0 278.0 L226.5 295.0 M200.0 278.0 L219.0 304.5 M200.0 278.0 L208.5 309.9 M200.0 278.0 L196.8 310.4 M200.0 278.0 L185.5 306.0 M200.0 278.0 L176.5 297.4 M200.0 278.0 L171.0 285.8 M200.0 278.0 L170.0 273.0 M200.0 278.0 L173.5 261.0 M200.0 278.0 L181.0 251.5 M200.0 278.0 L191.5 246.1 M200.0 278.0 L203.2 245.6 M200.0 278.0 L214.5 250.0 M200.0 278.0 L223.5 258.6"/>
<ellipse cx="212.0" cy="272.0" rx="30.0" ry="33.0" transform="rotate(-15 212.0 272.0)"/><ellipse cx="212.0" cy="272.0" rx="25.5" ry="28.1" transform="rotate(-15 212.0 272.0)"/><path d=""/>
<ellipse cx="428.0" cy="282.0" rx="21.0" ry="24.0" transform="rotate(-10 428.0 282.0)"/><ellipse cx="428.0" cy="282.0" rx="18.5" ry="21.1" transform="rotate(-10 428.0 282.0)"/><ellipse cx="428.0" cy="282.0" rx="15.1" ry="17.3" transform="rotate(-10 428.0 282.0)"/><ellipse cx="428.0" cy="282.0" rx="11.6" ry="13.2" transform="rotate(-10 428.0 282.0)"/><ellipse cx="428.0" cy="282.0" rx="8.4" ry="9.6" transform="rotate(-10 428.0 282.0)"/><ellipse cx="428.0" cy="282.0" rx="5.2" ry="6.0" transform="rotate(-10 428.0 282.0)"/><path d="M428.0 282.0 L448.7 278.4 M428.0 282.0 L448.4 289.0 M428.0 282.0 L444.2 298.2 M428.0 282.0 L436.7 304.2 M428.0 282.0 L427.5 305.9 M428.0 282.0 L418.4 302.8 M428.0 282.0 L411.2 295.5 M428.0 282.0 L407.3 285.6 M428.0 282.0 L407.6 275.0 M428.0 282.0 L411.8 265.8 M428.0 282.0 L419.3 259.8 M428.0 282.0 L428.5 258.1 M428.0 282.0 L437.6 261.2 M428.0 282.0 L444.8 268.5"/>
<ellipse cx="436.0" cy="276.0" rx="21.0" ry="24.0" transform="rotate(-10 436.0 276.0)"/><ellipse cx="436.0" cy="276.0" rx="17.8" ry="20.4" transform="rotate(-10 436.0 276.0)"/><path d=""/>
<ellipse cx="385.0" cy="215.0" rx="18.0" ry="20.0" transform="rotate(-12 385.0 215.0)"/><ellipse cx="385.0" cy="215.0" rx="15.3" ry="17.0" transform="rotate(-12 385.0 215.0)"/><ellipse cx="385.0" cy="215.0" rx="11.7" ry="13.0" transform="rotate(-12 385.0 215.0)"/><ellipse cx="385.0" cy="215.0" rx="8.1" ry="9.0" transform="rotate(-12 385.0 215.0)"/><path d="M385.0 215.0 L402.6 211.3 M385.0 215.0 L402.3 221.5 M385.0 215.0 L397.4 230.1 M385.0 215.0 L389.2 234.6 M385.0 215.0 L379.8 233.8 M385.0 215.0 L371.8 228.0 M385.0 215.0 L367.4 218.7 M385.0 215.0 L367.7 208.5 M385.0 215.0 L372.6 199.9 M385.0 215.0 L380.8 195.4 M385.0 215.0 L390.2 196.2 M385.0 215.0 L398.2 202.0"/>
</g>
<polygon points="97.6,270.0 127.2,256.5 157.7,248.0 176.3,241.2 184.8,227.7 196.6,205.7 208.5,200.6 242.3,187.0 276.2,178.6 305.4,173.5 330.8,174.4 347.7,180.3 359.5,188.8 373.0,186.2 398.5,184.5 415.4,189.6 432.3,200.6 449.2,210.8 466.2,218.4 479.7,226.8 482.2,234.5 481.4,241.2 472.9,251.4 457.7,264.9 454.3,278.5 447.5,292.0 435.7,302.2 422.2,306.4 413.7,298.8 381.5,312.3 347.7,326.7 313.8,341.0 286.8,353.8 277.9,363.0 275.0,378.0 262.0,388.0 235.6,391.9 222.0,388.0 217.0,385.1 191.6,395.3 154.3,402.9 139.0,395.3 130.6,385.0 123.9,363.1 120.5,346.2 115.4,329.3 107.0,309.0 99.3,285.3 97.6,271.7"/>
<path d="M99 286 L130 272 L178 256 L200 300 L286 268 L414 222 L458 265"/>
<path d="M176 241 L200 300 L217 385"/>
<path d="M107 309 L140 296 L200 300"/>
<path d="M120 346 L217 318 L262 312 L330 292 L400 268 L455 248"/>
<path d="M130 385 L220 352"/>
<path d="M196.6 205.7 L262 312 M208.5 200.6 L230 236 L330 205 L347 181"/>
<path d="M230 236 L262 312 M330 205 L400 268 M359.5 189 L415 232 L466 218"/>
<path d="M242 187 L290 268 M276 179 L322 258 M305 174 L352 248"/>
<path d="M286.8 353.8 L262 312 M347.7 326.7 L330 292 M413.7 298.8 L400 268"/>
<path d="M194.8 203.8 L243.8 188.6 L311.2 173.1 L336.9 175.1 L362.2 186.9 M195.2 205.1 L244.3 189.9 L311.8 174.4 L337.4 176.4 L362.8 188.2 M195.8 206.3 L244.8 191.1 L312.2 175.6 L337.9 177.6 L363.2 189.4 M196.2 207.6 L245.3 192.4 L312.8 176.9 L338.4 178.9 L363.8 190.7"/>
<path d="M176.2 249.1 L199.2 260.1 L224.2 278.1 L244.2 294.1 M176.8 250.4 L199.8 261.4 L224.8 279.4 L244.8 295.4 M177.2 251.6 L200.2 262.6 L225.2 280.6 L245.2 296.6 M177.8 252.9 L200.8 263.9 L225.8 281.9 L245.8 297.9"/>
<path d="M244.2 294.1 L299.2 274.1 L369.2 248.1 L414.2 230.1 M244.8 295.4 L299.8 275.4 L369.8 249.4 L414.8 231.4 M245.2 296.6 L300.2 276.6 L370.2 250.6 L415.2 232.6 M245.8 297.9 L300.8 277.9 L370.8 251.9 L415.8 233.9"/>
<path d="M195.8 204.1 L214.2 238.1 L244.2 294.1 M196.3 205.4 L214.8 239.4 L244.8 295.4 M196.8 206.6 L215.2 240.6 L245.2 296.6 M197.3 207.9 L215.8 241.9 L245.8 297.9"/>
<path d="M362.2 187.1 L389.2 210.1 L414.2 230.1 M362.8 188.4 L389.8 211.4 L414.8 231.4 M363.2 189.6 L390.2 212.6 L415.2 232.6 M363.8 190.9 L390.8 213.9 L415.8 233.9"/>
<path d="M261.2 310.1 L299.2 296.1 L346.2 280.1 L399.2 260.1 L454.2 238.1 M261.8 311.4 L299.8 297.4 L346.8 281.4 L399.8 261.4 L454.8 239.4 M262.2 312.6 L300.2 298.6 L347.2 282.6 L400.2 262.6 L455.2 240.6 M262.8 313.9 L300.8 299.9 L347.8 283.9 L400.8 263.9 L455.8 241.9"/>
<path d="M289.2 190.1 L317.2 233.1 L335.2 268.1 M289.8 191.4 L317.8 234.4 L335.8 269.4 M290.2 192.6 L318.2 235.6 L336.2 270.6 M290.8 193.9 L318.8 236.9 L336.8 271.9"/>
<path d="M98.2 284.1 L129.2 270.1 L177.2 254.1 M98.8 285.4 L129.8 271.4 L177.8 255.4 M99.2 286.6 L130.2 272.6 L178.2 256.6 M99.8 287.9 L130.8 273.9 L178.8 257.9"/>
<path d="M286.1 351.9 L346.9 324.8 L412.9 296.9 M286.6 353.2 L347.4 326.1 L413.4 298.2 M287.1 354.4 L347.9 327.3 L413.9 299.4 M287.6 355.7 L348.4 328.6 L414.4 300.7"/>
</g></svg>
<!-- car2: rear 3/4 view -->
<svg class="abs" style="left:612px;top:72px" width="559" height="379" viewBox="612 72 559 379">
<defs>
<linearGradient id="c2side" x1="820" y1="0" x2="1112" y2="0" gradientUnits="userSpaceOnUse"><stop offset="0" stop-color="#1656e2"/><stop offset=".45" stop-color="#1250dc"/><stop offset=".6" stop-color="#0a3cb8"/><stop offset=".74" stop-color="#08308c"/><stop offset=".85" stop-color="#062670"/><stop offset="1" stop-color="#061f60"/></linearGradient>
<linearGradient id="c2trunk" x1="0" y1="240" x2="0" y2="300" gradientUnits="userSpaceOnUse"><stop offset="0" stop-color="#0638a8"/><stop offset=".5" stop-color="#083eb4"/><stop offset="1" stop-color="#0638a8"/></linearGradient>
<linearGradient id="c2glass" x1="0" y1="170" x2="0" y2="245" gradientUnits="userSpaceOnUse"><stop offset="0" stop-color="#b9bdc6"/><stop offset=".4" stop-color="#d3d5da"/><stop offset="1" stop-color="#c4c6cc"/></linearGradient>
<linearGradient id="c2bump" x1="0" y1="0" x2="0" y2="1"><stop offset="0" stop-color="#a8a8a8"/><stop offset=".3" stop-color="#eeeeee"/><stop offset=".8" stop-color="#dcdcdc"/><stop offset="1" stop-color="#9a9a9a"/></linearGradient>
<linearGradient id="c2hub" x1="0" y1="0" x2="1" y2="1"><stop offset="0" stop-color="#f2f2f2"/><stop offset=".6" stop-color="#d0d0d0"/><stop offset="1" stop-color="#a8a8a8"/></linearGradient>
</defs>
<!-- under shadow / exhaust -->
<path d="M745 360 L755 373 L780 377.500 L790 372.500 L788 366 Z" fill="#2c2c2c"/>
<path d="M973.300 355 L978.300 341.700 L980 328.300 L976.700 316.700 L970 308.300 L960 306.700 L943.300 315 L926.700 330 L913.300 350 L905 366.700 Z" fill="#16181e"/><path d="M1099 268 L1094.700 269 L1089 282 L1082.800 294.700 L1076.500 307.500 L1067.300 320.300 L1061 326 L1104 292 Z" fill="#16181e"/>
<!-- far front wheel -->
<g transform="rotate(9 1085 310)"><ellipse cx="1077" cy="313" rx="15" ry="35" fill="#4e4e4c"/><ellipse cx="1088" cy="310" rx="10.500" ry="32" fill="#3a3a3a"/><ellipse cx="1088.300" cy="310" rx="9.500" ry="30.500" fill="#dadada"/><ellipse cx="1088.800" cy="309" rx="7" ry="25" fill="#454545"/><ellipse cx="1089" cy="308" rx="5" ry="19" fill="url(#c2hub)"/></g>
<!-- inner fender -->
<path d="M960 318 L968 317 L975 322 L978.500 335 L975.500 346 L965 346 Z" fill="#d8d8e6"/>
<!-- rear wheel -->
<g transform="rotate(13 937 362)"><ellipse cx="915.0" cy="365.0" rx="29" ry="48.5" fill="#3e3e3e"/><ellipse cx="919.9" cy="365.2" rx="29" ry="48.5" fill="#3e3e3e"/><ellipse cx="924.8" cy="365.4" rx="29" ry="48.5" fill="#3e3e3e"/><ellipse cx="929.7" cy="365.6" rx="29" ry="48.5" fill="#3e3e3e"/><ellipse cx="934.6" cy="365.8" rx="29" ry="48.5" fill="#3e3e3e"/><ellipse cx="939.500" cy="366" rx="27.500" ry="49.500" fill="#383838"/><ellipse cx="937.500" cy="362" rx="24.500" ry="44" fill="#d6d6d6"/><ellipse cx="938" cy="361.500" rx="19.500" ry="37.500" fill="#3c3c3c"/><ellipse cx="939" cy="360" rx="15.500" ry="30" fill="#8a8a8a"/><ellipse cx="938.500" cy="358.500" rx="12" ry="24" fill="url(#c2hub)"/></g>
<path d="M886 377 L888.600 391 L900.800 409.500 L914.400 415.300 L936.600 413.800 L905 380 Z" fill="#3e3e3e"/>
<!-- body silhouette -->
<path d="M640 266.700 L646.700 260 L658.300 255 L696.700 248.300 L730 245 L756.700 240.800 L760 239 L768.300 226.700 L780 201.700 L790 185 L796.700 179 L803.300 175.800 L813.300 174 L843.300 169 L893.300 164 L943.300 164 L996.700 169 L1026.700 175 L1035 181.700 L1040 193.300 L1046.700 215 L1051.700 230.800 L1076.500 232.800 L1094.700 237.300 L1109.300 243.700 L1112 249 L1111 265.600 L1107.500 276.500 L1103.800 289.300 L1099.300 295.700 L1096 272 L1094.700 269 L1089 282 L1082.800 294.700 L1076.500 307.500 L1067.300 320.300 L1061 326 L1020 338.500 L973.300 355 L978.300 341.700 L980 328.300 L976.700 316.700 L970 308.300 L960 306.700 L943.300 315 L926.700 330 L913.300 350 L905 366.700 L886.700 378.300 L855 381.700 L843.300 380 L836.700 378 L788 372 L746 361 L686 349 L650 334 L643.300 315 L639 303 L637.500 285 L636.700 276.700 Z" fill="url(#c2trunk)"/>
<!-- side panel -->
<path d="M813 300 L810 283 L815 273 L826.700 265.800 L860 260 L910 252.500 L941.700 243.300 L1051.700 230.800 L1076.500 232.800 L1094.700 237.300 L1109.300 243.700 L1112 249 L1111 265.600 L1107.500 276.500 L1103.800 289.300 L1099.300 295.700 L1096 272 L1094.700 269 L1089 282 L1082.800 294.700 L1076.500 307.500 L1067.300 320.300 L1061 326 L1020 338.500 L973.300 355 L978.300 341.700 L980 328.300 L976.700 316.700 L970 308.300 L960 306.700 L943.300 315 L926.700 330 L913.300 350 L905 366.700 L886.700 378.300 L855 381.700 L843.300 380 L850 372 L852 358 L822 345 L818 329 Z" fill="url(#c2side)"/>
<!-- highlights on side -->
<g stroke="#3a7af8" fill="none" opacity=".4" stroke-linecap="round"><path d="M826 322 Q880 312 950 300" stroke-width="7"/><path d="M830 344 Q870 338 915 326" stroke-width="5"/><path d="M965 292 Q990 288 1015 285" stroke-width="8"/><path d="M985 310 Q1000 306 1015 303" stroke-width="5"/></g>
<!-- roof -->
<path d="M790 185 L796.700 179 L803.300 175.800 L813.300 174 L843.300 169 L893.300 164 L943.300 164 L996.700 169 L1026.700 175 L1035 181.700 L1040 193.300 L1046.700 215 L1051.700 230.800 L941.700 243.300 L922.500 243 L760 239 L768.300 226.700 L780 201.700 Z" fill="#0a44c4"/>
<!-- rear glass -->
<path d="M760 238.500 L768.300 226.700 L780 201.700 L791.700 183.500 L810 177.500 L860 174 L910 175 L923.300 179 L931.700 188 L931.700 205 L926.700 225 L922.500 243 L876.700 240.800 L826.700 236.700 Z" fill="url(#c2glass)"/>
<!-- interior of rear glass: lighter panes and seats -->
<path d="M812 189 L856 186 L853 232 L800 230 Z" fill="#d9dade" opacity=".9"/><path d="M864 186 L902 188 L898 234 L862 233 Z" fill="#dcdde1" opacity=".9"/><path d="M908 190 L928 196 L922 236 L904 236 Z" fill="#d4d6dc" opacity=".8"/>
<path d="M800 237 Q800 222 810 222 Q820 222 821 237 Z" fill="#eeeeee"/><path d="M805 237 Q806 228 811 228 Q816 229 816 237 Z" fill="#b8bcc8"/>
<path d="M884 241 Q884 224 896 224 Q909 225 910 242 Z" fill="#efefef"/><path d="M890 241 Q891 231 897 231 Q903 232 904 242 Z" fill="#bcc4d8"/>
<path d="M791.700 183.500 L780 201.700 L768.300 226.700 L760 238.500 L775 238 L790 205 L800 186 Z" fill="#aeb2ba" opacity=".85"/>
<!-- glass frame -->
<path d="M760 238.500 L768.300 226.700 L780 201.700 L791.700 183.500 L810 177.500 L860 174 L910 175 L923.300 179 L931.700 188 L931.700 205 L926.700 225 L922.500 243 L876.700 240.800 L826.700 236.700 Z" fill="none" stroke="#858c96" stroke-width="2.600"/>
<!-- C pillar vent -->
<rect x="937" y="192.500" width="11" height="5.500" fill="#c8c8c8" stroke="#555" stroke-width="1"/>
<!-- side windows -->
<path d="M950 236.700 L951.700 208 L956 190 L964 179.500 L999 175.500 L1003.300 193.300 L1011.700 234 Z" fill="#cfd1d6"/>
<path d="M1005.500 180 L1031 182.500 L1038 200 L1048.700 228.300 L1040 231.700 L1015 234 Z" fill="#cfd1d6"/>
<path d="M972 208 L990 207 L996 235 L972 236 Z" fill="#b4c4e8"/><path d="M958 210 L972 207 L972 236 L952 236.500 Z" fill="#dadbe0"/>
<path d="M950 236.700 L951.700 208 L956 190 L964 179.500 L999 175.500 L1003.300 193.300 L1011.700 234 Z M1005.500 180 L1031 182.500 L1038 200 L1048.700 228.300 L1040 231.700 L1015 234 Z" fill="none" stroke="#505866" stroke-width="2.600"/>
<path d="M961.700 188 L970.800 235.800 M1031 187 L1038.300 231.700" stroke="#4a5468" stroke-width="1.500"/>
<path d="M1001 178 L1013 234" stroke="#0a3088" stroke-width="4"/>
<path d="M1035 182 L1040 193.300 L1046.700 215 L1051.700 230.800" stroke="#20242c" stroke-width="3" fill="none"/>
<!-- belt and chrome strips on side -->
<g fill="none" stroke="#8a929c" stroke-width="1.600">
<path d="M941.700 243.300 L1051.700 230.800"/>
<path d="M816.700 271.700 L826.700 265.800 L860 260 L910 252.500 L941.700 246.700"/>
<path d="M818.300 278.300 L951.700 263 M951.700 263 L1020 250"/>
<path d="M820 301.700 L890 288.300 L905 283 L951.700 276.700 L1022 262"/>
<path d="M943.300 246.700 L950 263.300 L955 286.700 L958.300 306.700" stroke="#a8b0bc"/>
<path d="M1013.300 235 L1018.300 253.300 L1022.500 276.700 L1023.300 301.700 L1020 330" stroke="#6a7488"/>
<path d="M980 336 L1020 326 L1046 316" stroke="#5a6890" stroke-width="1.200"/>
<path d="M973.300 355 L978.300 341.700 L980 328.300 L976.700 316.700 L970 308.300 L960 306.700 L943.300 315 L926.700 330 L913.300 350 L905 366.700" stroke="#a4b0d4" stroke-width="2.400" stroke-dasharray="2.500 1.200"/>
<path d="M1060 250 L1108 246 M1050 262 L1110 258" stroke="#0a1c60" stroke-width="1.200"/>
</g>
<g stroke-dasharray="6 4 2 7 10 3 3 8" opacity=".6" fill="none" stroke="#e6eaf2" stroke-width="1.600">
<path d="M941.700 243.300 L1051.700 230.800"/>
<path d="M816.700 271.700 L826.700 265.800 L860 260 L910 252.500 L941.700 246.700"/>
<path d="M818.300 278.300 L951.700 263 M951.700 263 L1020 250"/>
<path d="M820 301.700 L890 288.300 L905 283 L951.700 276.700 L1022 262"/>
<path d="M943.300 246.700 L950 263.300 L955 286.700 L958.300 306.700" stroke="#e6eaf2"/>
<path d="M1013.300 235 L1018.300 253.300 L1022.500 276.700 L1023.300 301.700 L1020 330" stroke="#e6eaf2"/>
<path d="M980 336 L1020 326 L1046 316" stroke="#e6eaf2" stroke-width="1.200"/>
<path d="M973.300 355 L978.300 341.700 L980 328.300 L976.700 316.700 L970 308.300 L960 306.700 L943.300 315 L926.700 330 L913.300 350 L905 366.700" stroke="#e6eaf2" stroke-width="2.400" />

</g>
<rect x="910" y="265" width="23.300" height="13.300" fill="#20242c" stroke="#9aa2b0" stroke-width="1.200" transform="skewY(-6) translate(0 96.500)"/>
<path d="M957 262 L972 259 L974 270 L961 273 Z" fill="#9aa0a8" stroke="#d0d4da" stroke-width=".8"/>
<path d="M1020 247 L1027 245.500 L1028 258 L1022 259 Z" fill="#9aa0a8"/>
<path d="M1096 274 L1104.700 272 L1104.700 291 L1099 295 Z" fill="#8a8c98"/>
<!-- trunk lid chrome -->
<path d="M640 268 L651.700 275 L720 283 L796.700 292.500 L810 283 L815 273 L826.700 266.700" fill="none" stroke="#8c9096" stroke-width="3"/>
<path d="M640 266.700 L646.700 260 L658.300 255 L651.700 263 L651 274 Z" fill="#8c9096"/>
<!-- black tail panel -->
<path d="M638 282 L720 289.500 L813 300 L818.500 329.500 L737 320.500 L640 305 Z" fill="#050505"/>
<!-- blue lower -->
<!-- taillights -->
<path d="M638.500 287 L646 287.800 L646.500 304 L641 303 Z" fill="#ee8a3c"/><path d="M646 287.800 L676 291 L677 308.500 L646.500 304 Z" fill="#e01414"/><path d="M654 291.700 L659 292.200 L659.500 303.500 L654.500 303 Z" fill="#e8e8e8"/>
<path d="M756.700 302.500 L793.300 305.700 L794 326 L757.500 321 Z" fill="#ee1010"/><path d="M793.300 305.700 L813.300 307.500 L814.500 329 L794 326 Z" fill="#f0883c"/><path d="M770.800 307.500 L778.300 308.200 L778.800 322 L771.300 321 Z" fill="#ececec" stroke="#888" stroke-width=".7"/>
<!-- plate holder -->
<path d="M701.700 303.300 L710 301 L728.300 305 L733.300 313 L736.700 335 L705 330 L700.800 313 Z" fill="#e2e2e2" stroke="#909090" stroke-width="1"/>
<path d="M708 313 L716 311.500 L726 313.500 L727 319 L721.500 331 L709 318 Z" fill="none" stroke="#303030" stroke-width="1"/>
<circle cx="713" cy="298" r="1.200" fill="#aaa"/>
<rect x="651.700" y="314" width="13.300" height="8" fill="#b4b8c0" stroke="#808890" stroke-width=".8" transform="rotate(8 658 318)"/>
<!-- bumper -->
<path d="M648.300 323.300 L685 333.300 L736.700 341.700 L780 351.700 L830 360 L850 353.500 L851.700 360 L845 372.500 L830 374 L788.300 369 L746.700 358.300 L686.700 346.700 L651.700 335 Z" fill="url(#c2bump)"/>
<path d="M648.300 323.300 L685 333.300 L736.700 341.700 L780 351.700 L830 360 L850 353.500" fill="none" stroke="#808080" stroke-width="1.200"/>
<path d="M672 320 L676 320 L689 347 L684 347.500 Z" fill="#c8c8c8" stroke="#707070" stroke-width=".8"/>
<path d="M770 337 L776 336.500 L790 370 L783 371 Z" fill="#d0d0d0" stroke="#707070" stroke-width=".8"/>
<!-- 1500 badge -->
<rect x="786" y="338" width="23" height="8" fill="#c8c8c8" stroke="#555" stroke-width="1" transform="rotate(6 797 342)"/>
<text x="788.500" y="345.500" font-family="Liberation Sans,sans-serif" font-size="7.500" font-weight="bold" fill="#222" transform="rotate(6 797 342)">1500</text>
<!-- panel gap line trunk/fender -->
<path d="M813 300 L818.500 329.500 L822 346 L824 360" fill="none" stroke="#a0a8b8" stroke-width="1.300"/>
</svg>
<!-- car3: side view -->
<svg class="abs" style="left:2px;top:458px" width="603" height="452" viewBox="2 458 603 452">
<defs>
<linearGradient id="c3b" x1="0" y1="636" x2="0" y2="768" gradientUnits="userSpaceOnUse"><stop offset="0" stop-color="#062880"/><stop offset=".18" stop-color="#0432a0"/><stop offset=".42" stop-color="#0848d0"/><stop offset=".6" stop-color="#0442c6"/><stop offset=".85" stop-color="#0438ac"/><stop offset="1" stop-color="#042e90"/></linearGradient>
<linearGradient id="c3r" x1="0" y1="587" x2="0" y2="615" gradientUnits="userSpaceOnUse"><stop offset="0" stop-color="#0434a8"/><stop offset=".35" stop-color="#0c4cd8"/><stop offset="1" stop-color="#0440c0"/></linearGradient>
<linearGradient id="c3h" x1="0" x2="1"><stop offset="0" stop-color="#041a58" stop-opacity=".75"/><stop offset=".5" stop-color="#041a58" stop-opacity=".3"/><stop offset="1" stop-color="#041a58" stop-opacity="0"/></linearGradient>
<linearGradient id="c3t" x1="1" x2="0"><stop offset="0" stop-color="#041a58" stop-opacity=".7"/><stop offset=".6" stop-color="#041a58" stop-opacity=".25"/><stop offset="1" stop-color="#041a58" stop-opacity="0"/></linearGradient>
<linearGradient id="c3g" x1="0" y1="0" x2="0" y2="1"><stop offset="0" stop-color="#c9ccd2"/><stop offset=".5" stop-color="#e4e5e8"/><stop offset="1" stop-color="#cfd0d4"/></linearGradient>
<radialGradient id="hub" cx=".45" cy=".4" r=".6"><stop offset="0" stop-color="#f4f4f4"/><stop offset=".7" stop-color="#dcdcdc"/><stop offset="1" stop-color="#bdbdbd"/></radialGradient>
<linearGradient id="rim" x1="0" y1="0" x2="1" y2="1"><stop offset="0" stop-color="#8a8a8a"/><stop offset=".5" stop-color="#b8b8b8"/><stop offset="1" stop-color="#7c7c7c"/></linearGradient>
</defs>
<!-- wheels -->
<path d="M71.700 752.500 L70 738.300 L73.300 728.300 L81.700 718.300 L93.300 711.700 L120 711.700 L136.700 721.700 L153.300 736.700 L165 750 L176.700 763.300 L120 770 Z" fill="#10162c"/><path d="M388.300 768 L390 756.700 L396.700 743 L408.300 733 L425 728.300 L458.300 730.800 L475 738 L486.700 748 L496.700 765 L440 772 Z" fill="#10162c"/>
<g>
<ellipse cx="120.500" cy="757.200" rx="43.800" ry="37.800" fill="#454545"/><ellipse cx="118.400" cy="757.600" rx="35.400" ry="31.400" fill="#fbfbfb"/><ellipse cx="117.800" cy="757.800" rx="29.100" ry="25.800" fill="#4a4a4a"/><ellipse cx="118.400" cy="757.400" rx="21.700" ry="19.900" fill="url(#rim)"/><ellipse cx="117.600" cy="757.800" rx="17.800" ry="15.200" fill="url(#hub)"/>
<ellipse cx="438" cy="762" rx="44.300" ry="38.500" fill="#454545"/><ellipse cx="439.300" cy="762.500" rx="36.400" ry="31.700" fill="#fbfbfb"/><ellipse cx="439.400" cy="762.500" rx="30" ry="26" fill="#4a4a4a"/><ellipse cx="438.800" cy="760.800" rx="22" ry="20" fill="url(#rim)"/><ellipse cx="439.400" cy="761.600" rx="18.800" ry="16" fill="url(#hub)"/>
</g>
<!-- body -->
<path id="c3body" d="M25.800 695 L30 686.700 L41.700 678.300 L70 663.300 L95 650 L113.300 644.200 L136.700 639.200 L170 636.700 L200 637 L222 606 L225 598.300 L231.700 593 L263.300 589 L313.300 587.500 L363.300 590 L405 595 L426.700 601.700 L435 611 L443 626.700 L456.700 644.500 L500 646.700 L508.300 653.300 L525 666.700 L550 681.700 L566.700 685.800 L576.700 691.700 L582.500 700 L582.500 713 L578.300 730 L568.300 746.700 L553.300 758.300 L516.700 763.300 L496.700 765 L486.700 748 L475 738 L458.300 730.800 L425 728.300 L408.300 733 L396.700 743 L390 756.700 L388.300 768 L203 766 L176.700 763.300 L165 750 L153.300 736.700 L136.700 721.700 L120 711.700 L93.300 711.700 L81.700 718.300 L73.300 728.300 L70 738.300 L71.700 752.500 L68.300 750.800 L53.300 740 L40 730 L35.800 721.700 L30 711.700 L26.700 700 Z" fill="url(#c3b)"/>
<path d="M200 637 L222 606 L225 598.300 L231.700 593 L263.300 589 L313.300 587.500 L363.300 590 L405 595 L426.700 601.700 L435 611 L443 626.700 L456.700 644.500 L473 673 L200 672 L189 653 Z" fill="url(#c3r)"/>
<!-- hood/trunk shading -->
<path d="M25.800 695 L30 686.700 L41.700 678.300 L70 663.300 L95 650 L113.300 644.200 L136.700 639.200 L170 636.700 L200 637 L189 655 L196 671 L92 671 L45 684 Z" fill="#051e68" opacity=".55"/>
<path d="M456.700 644.500 L500 646.700 L508.300 653.300 L525 666.700 L550 681.700 L566.700 685.800 L576 691 L470 678 Z" fill="#051e68" opacity=".45"/>
<path d="M25.800 695 L92 671 L200 672 L200 766 L176.700 763.300 L165 750 L153.300 736.700 L136.700 721.700 L120 711.700 L93.300 711.700 L81.700 718.300 L73.300 728.300 L70 738.300 L71.700 752.500 L53.300 740 L40 730 L30 711.700 Z" fill="url(#c3h)"/>
<path d="M582.500 700 L582.500 713 L578.300 730 L568.300 746.700 L553.300 758.300 L516.700 763.300 L496.700 765 L486.700 748 L475 738 L470 700 L470 680 L576 691 Z" fill="url(#c3t)"/>
<!-- roof highlight -->
<path d="M240 597 Q320 590 400 599" stroke="#2a68f4" stroke-width="5" fill="none" opacity=".5"/>
<!-- glass -->
<path d="M222 606 L228 615 L201.700 663 L189 653 Z" fill="#c4c8cc"/><path d="M221 612 L199 655" stroke="#e8eaec" stroke-width="5" opacity=".7"/>
<path d="M224 660 L236.700 630 L250 617.500 L311.700 615.800 L312.500 668.300 L225 668.300 Z" fill="url(#c3g)"/>
<path d="M323.300 615.800 L376.700 615.800 L395 625 L413.300 646.700 L425 668.300 L323.300 669 Z" fill="url(#c3g)"/>
<path d="M436.700 618 L450 638 L470 666.700 L471.700 672.500 L456.700 674 L445 660 L435 635 L431.700 621.700 Z" fill="#c6c9cd"/>
<!-- interior hints -->
<g fill="none" stroke="#9fb0d8" stroke-width="1.200" opacity=".8"><path d="M250 636 H312 M323 636 H392"/><path d="M252 640 Q300 634 372 642 Q380 650 360 652 Q340 650 330 644"/><ellipse cx="262" cy="653" rx="9" ry="14" stroke="#9a9ca8"/><ellipse cx="262" cy="653" rx="12" ry="17" stroke="#a8aab4"/><path d="M285 640 Q292 655 284 666" stroke="#a8aab4"/></g>
<path d="M250 626 H311 M323 626 H395" stroke="#f2f2f4" stroke-width="6" opacity=".7"/>
<!-- window chrome -->
<g fill="none" stroke="#626a78" stroke-width="2.200">
<path d="M224 660 L236.700 630 L250 617.500 L311.700 615.800 L312.500 668.300 L225 668.300 Z"/><path d="M249.500 618 V668"/>
<path d="M323.300 615.800 L376.700 615.800 L395 625 L413.300 646.700 L425 668.300 L323.300 669 Z"/><path d="M390.800 623 V668"/>
<path d="M228 613 L236 606 L252 603.500 L378 604.500 L400 612 L418 632 L436 668" stroke="#8a9098" stroke-width="1.400"/>
<path d="M222 606 L228 615 L201.700 663 L189 653 Z" stroke="#59606a" stroke-width="1.200"/>
<path d="M436.700 618 L450 638 L470 666.700 L471.700 672.500 L456.700 674 L445 660 L435 635 L431.700 621.700 Z" stroke="#59606a" stroke-width="1.200"/>
<path d="M232 620 L210 662 M236 622 L214 664" stroke="#3b4a7a" stroke-width="1.200"/>
</g>
<path d="M317.800 612 V669" stroke="#0438b0" stroke-width="9"/><path d="M314 614 V669 M321.500 614 V669" stroke="#5a6478" stroke-width="1.400"/>
<rect x="413" y="632" width="12" height="5" fill="#30343c" stroke="#9aa0a8" stroke-width="1"/>
<!-- moldings -->
<g fill="none" stroke="#7e8690" stroke-width="1.500">
<path d="M92 671 L196.700 671 L440 671"/>
<path d="M75 678.300 L196.700 676.700 M221.700 678.300 L311.700 680 M320 682.500 L436 684 M443 680 L575 688"/>
<path d="M30 691.700 L196.700 695 L313 696.700 M320 699 L436 702.500 L441.700 703.300 L582.500 709"/>
<path d="M200.800 671 Q196.700 682 196.700 693 L196.700 721.700 L205 757.500 L205 764" stroke="#5f6874"/>
<path d="M315.800 670 V764" stroke="#5f6874" stroke-width="2"/>
<path d="M437 671 L438 728" stroke="#5f6874" stroke-width="1.600"/>
<path d="M205 759 L388 759" stroke="#5f6874"/>
<path d="M71 752 L70 738.300 L73.300 728.300 L81.700 718.300 L93.300 711.700 L120 711.700 L136.700 721.700 L153.300 736.700 L165 750 L176.700 763.300" stroke="#3a4a78" stroke-width="2.500"/>
<path d="M388.300 768 L390 756.700 L396.700 743 L408.300 733 L425 728.300 L458.300 730.800 L475 738 L486.700 748 L496.700 765" stroke="#3a4a78" stroke-width="2.500"/>
</g>
<g stroke-dasharray="6 4 2 7 10 3 3 8" opacity=".6" fill="none" stroke="#e6eaf2" stroke-width="1.500">
<path d="M92 671 L196.700 671 L440 671"/>
<path d="M75 678.300 L196.700 676.700 M221.700 678.300 L311.700 680 M320 682.500 L436 684 M443 680 L575 688"/>
<path d="M30 691.700 L196.700 695 L313 696.700 M320 699 L436 702.500 L441.700 703.300 L582.500 709"/>
<path d="M200.800 671 Q196.700 682 196.700 693 L196.700 721.700 L205 757.500 L205 764" stroke="#e6eaf2"/>
<path d="M315.800 670 V764" stroke="#e6eaf2" stroke-width="2"/>
<path d="M437 671 L438 728" stroke="#e6eaf2" stroke-width="1.600"/>
<path d="M205 759 L388 759" stroke="#e6eaf2"/>
<path d="M71 752 L70 738.300 L73.300 728.300 L81.700 718.300 L93.300 711.700 L120 711.700 L136.700 721.700 L153.300 736.700 L165 750 L176.700 763.300" stroke="#e6eaf2" stroke-width="2.500"/>
<path d="M388.300 768 L390 756.700 L396.700 743 L408.300 733 L425 728.300 L458.300 730.800 L475 738 L486.700 748 L496.700 765" stroke="#e6eaf2" stroke-width="2.500"/>
</g>
<!-- details -->
<rect x="150" y="700" width="33.300" height="5.800" fill="#8c9096" stroke="#4a5060" stroke-width=".8"/>
<rect x="288.300" y="682" width="21" height="10" fill="#7c8288" stroke="#b8bcc4" stroke-width="1"/><rect x="291" y="686" width="16" height="3" fill="#d0d4d8"/>
<rect x="409" y="688" width="22.500" height="10" fill="#7c8288" stroke="#b8bcc4" stroke-width="1"/><rect x="412" y="692" width="17" height="3" fill="#d0d4d8"/>
<rect x="460.800" y="691.700" width="31.700" height="9.100" fill="#1c2026" stroke="#8c929c" stroke-width="1"/>
<circle cx="304" cy="704.500" r="1.800" fill="#8c9096" stroke="#d0d4d8" stroke-width=".6"/>
<path d="M554 744 L568 743 L565 752 L556 753.500 Z" fill="#8a8c90"/>
<path d="M36.700 722 L42 722 L61 741 L52 741 L40 731 Z" fill="#4a4e58"/><path d="M40 729 L52 739" stroke="#90949c" stroke-width="1.200"/>
</svg>
<!-- car4: front 3/4 view -->
<svg class="abs" style="left:612px;top:458px" width="559" height="452" viewBox="612 458 559 452">
<defs>
<linearGradient id="c4side" x1="663" y1="0" x2="900" y2="0" gradientUnits="userSpaceOnUse"><stop offset="0" stop-color="#082c8c"/><stop offset=".12" stop-color="#062270"/><stop offset=".28" stop-color="#061e64"/><stop offset=".4" stop-color="#0834a4"/><stop offset=".5" stop-color="#0646cc"/><stop offset=".65" stop-color="#0c50dc"/><stop offset="1" stop-color="#0a4cd8"/></linearGradient>
<linearGradient id="c4hood" x1="900" y1="640" x2="1000" y2="720" gradientUnits="userSpaceOnUse"><stop offset="0" stop-color="#0642c8"/><stop offset=".5" stop-color="#0a4ad4"/><stop offset="1" stop-color="#0640c4"/></linearGradient>
<linearGradient id="c4glass" x1="0" y1="575" x2="0" y2="645" gradientUnits="userSpaceOnUse"><stop offset="0" stop-color="#b4b8c0"/><stop offset=".5" stop-color="#d2d4d8"/><stop offset="1" stop-color="#c6c8cc"/></linearGradient>
<linearGradient id="c4grille" x1="0" y1="0" x2="0" y2="1"><stop offset="0" stop-color="#8a8a8a"/><stop offset=".5" stop-color="#6a6a6a"/><stop offset="1" stop-color="#8e8e8e"/></linearGradient>
<linearGradient id="c4hub" x1="0" y1="0" x2="1" y2="0"><stop offset="0" stop-color="#f6f6f6"/><stop offset=".6" stop-color="#cfcfcf"/><stop offset="1" stop-color="#8c8c8c"/></linearGradient>
<linearGradient id="c4bump" x1="0" y1="0" x2="0" y2="1"><stop offset="0" stop-color="#b0b0b0"/><stop offset=".35" stop-color="#f0f0f0"/><stop offset=".8" stop-color="#d8d8d8"/><stop offset="1" stop-color="#909090"/></linearGradient>
</defs>
<path d="M830 775.800 L829 760 L830.800 743.300 L835 730 L841.700 720 L851.700 715 L866.700 717.500 L876.700 725 L886.700 740 L896.700 756.700 L915 781.700 L928.300 796.700 Z" fill="#16181e"/><path d="M695 699 L695 689 L698.800 690.200 L706 695.600 L713.300 707.500 L718.800 721 L723.400 726.600 L700 722 Z" fill="#16181e"/>
<!-- far front wheel -->
<path d="M1018 782 L1031 795 L1057 797 L1074 787 L1081 770 L1050 772 Z" fill="#3c3c3c"/><path d="M1026 783 Q1045 790 1066 778 L1060 775 Q1044 783 1030 780 Z" fill="#b4b4b4"/>
<path d="M684 690 L695 690 L695 698 L684 698 Z" fill="#d4d4dc"/>
<!-- far rear wheel -->
<g transform="rotate(-10 707 721)"><ellipse cx="722.0" cy="722.5" rx="13" ry="30.5" fill="#3a3a3a"/><ellipse cx="718.2" cy="722.1" rx="13" ry="30.5" fill="#3a3a3a"/><ellipse cx="714.5" cy="721.8" rx="13" ry="30.5" fill="#3a3a3a"/><ellipse cx="710.8" cy="721.4" rx="13" ry="30.5" fill="#3a3a3a"/><ellipse cx="707" cy="721" rx="12.500" ry="30.500" fill="#333"/><ellipse cx="707" cy="721" rx="11.500" ry="29" fill="#d0d0d0"/><ellipse cx="707.500" cy="720.500" rx="9" ry="24" fill="#404040"/><ellipse cx="707.500" cy="719" rx="6.500" ry="19" fill="url(#c4hub)"/></g>
<!-- inner fender -->
<path d="M833.500 740.600 L840.800 728 L856.500 725 L851 737.500 L845 762.500 L831.500 775 Z" fill="#c6c6ca"/><path d="M835 738 L840.800 728 L856.500 725 L852 733 Z" fill="#50505a"/>
<!-- near front wheel -->
<g transform="rotate(-12 873 783)"><ellipse cx="899.0" cy="787.0" rx="29.5" ry="56.5" fill="#3c3c3c"/><ellipse cx="893.8" cy="786.2" rx="29.5" ry="56.5" fill="#3c3c3c"/><ellipse cx="888.6" cy="785.4" rx="29.5" ry="56.5" fill="#3c3c3c"/><ellipse cx="883.4" cy="784.6" rx="29.5" ry="56.5" fill="#3c3c3c"/><ellipse cx="878.2" cy="783.8" rx="29.5" ry="56.5" fill="#3c3c3c"/><ellipse cx="873" cy="783" rx="29" ry="57" fill="#343434"/><ellipse cx="873" cy="783" rx="26" ry="53" fill="#c8c8c8"/><ellipse cx="873.500" cy="783" rx="21.500" ry="46" fill="#3e3e3e"/><ellipse cx="874" cy="784" rx="16" ry="35" fill="#858585"/><ellipse cx="873" cy="786" rx="12.500" ry="26" fill="url(#c4hub)"/></g>
<!-- body -->
<path d="M665 645.500 L666.900 640 L686.900 638.200 L706.700 636.700 L713.300 618.300 L720 598.300 L723.300 590 L733.300 584 L756.700 578.300 L783.300 574 L816.700 571 L866.700 570 L906 571.700 L923.300 576.700 L945 583.300 L950 590 L963.300 618.300 L973.300 635 L976.700 638.300 L1023.300 643.300 L1056.700 650 L1090 660 L1120 670 L1130 678.300 L1133.300 688.300 L1131.700 710 L1126.700 726.700 L1121.700 743.300 L1106.700 756.700 L1080 768.300 L1023.300 783.300 L990 793.300 L956.700 801.700 L938.300 803.300 L928.300 796.700 L915 781.700 L900 760 L896.700 756.700 L886.700 740 L876.700 725 L866.700 717.500 L851.700 715 L841.700 720 L835 730 L830.800 743.300 L829 760 L830 775.800 L808.300 766.700 L783.300 753 L752 740 L737 734 L723.400 726.600 L718.800 721 L713.300 707.500 L706 695.600 L698.800 690.200 L691.500 688.300 L683.300 690 L683.300 708.400 L676 702 L670.500 693.800 L666.900 684.700 L664 671 L663.700 657.300 Z" fill="url(#c4side)"/>
<!-- hood + front -->
<path d="M806.700 653.300 L820 644 L890 638.300 L976.700 638.300 L1023.300 643.300 L1056.700 650 L1090 660 L1120 670 L1130 678.300 L1133.300 688.300 L1131.700 710 L1126.700 726.700 L1121.700 743.300 L1106.700 756.700 L1080 768.300 L1023.300 783.300 L990 793.300 L956.700 801.700 L938.300 803.300 L928.300 796.700 L915 781.700 L900 760 L896.700 756.700 L886.700 740 L876.700 725 L866.700 717.500 L851.700 715 L841.700 720 L835 730 L830.800 743.300 L829 760 L830 775.800 L810 766.700 L805 751.700 L800 718.300 L800 693.300 L803.300 666.700 Z" fill="url(#c4hood)"/>
<!-- hood top lighter -->
<path d="M900 641.700 L976.700 638.300 L1023.300 643.300 L1056.700 650 L1090 660 L1120 670 L1118.300 680 L1098.300 683.300 L1056.700 691.700 L1006.700 698.300 L983 695 L973 690 L940 672 Z" fill="#0847d0"/>
<!-- side highlights -->
<g stroke="#3a7af8" fill="none" opacity=".5" stroke-linecap="round"><path d="M765 690 Q780 692 796 696" stroke-width="9"/><path d="M812 712 Q830 706 850 704" stroke-width="7"/><path d="M905 705 Q925 712 945 716" stroke-width="8"/></g>
<!-- roof -->
<path d="M706.700 636.700 L713.300 618.300 L720 598.300 L723.300 590 L733.300 584 L756.700 578.300 L783.300 574 L816.700 571 L866.700 570 L906 571.700 L923.300 576.700 L945 583.300 L950 590 L963.300 618.300 L973.300 635 L976.700 638.300 L890 638.300 L820 644 L806.700 653.300 L753.300 645 Z" fill="#0840bc"/>
<path d="M706.700 636.700 L713.300 618.300 L720 598.300 L723.300 590 L733.300 584 L756.700 578.300 L756.700 588 L733.300 592.500 L728.300 598.300 L713.300 633.300 Z" fill="#062a88"/>
<!-- windshield -->
<path d="M811 588 L850 581 L906 577 L925 579 L942 584 L949 590 L963.300 618.300 L973.300 635 L970 636 L923.300 635.800 L890 638.300 L866.700 640 L820 644 Z" fill="url(#c4glass)"/>
<path d="M815 592 L852 584 L860 630 L826 640 Z" fill="#dcdde0" opacity=".8"/><path d="M862 586 L898 580 L904 632 L868 636 Z" fill="#d8dadf" opacity=".85"/><path d="M905 580 L940 586 L960 628 L912 632 Z" fill="#cfd1d6" opacity=".9"/>
<path d="M829 612 Q838 596 848 612 L850 632 L830 636 Z" fill="#e8e8ea" opacity=".9"/><path d="M846 598 L852 600 L854 618 L848 616 Z" fill="#a8b8e0"/>
<path d="M811 588 L850 581 L906 577 L925 579 L942 584 L949 590 L963.300 618.300 L973.300 635 L970 636 L923.300 635.800 L890 638.300 L866.700 640 L820 644 Z" fill="none" stroke="#4a5260" stroke-width="2"/>
<path d="M912 576 L930 578.500 L944 583.500 L950 590" stroke="#1a2238" stroke-width="1.800" fill="none"/>
<!-- side windows -->
<path d="M712 634 L726 598 L732 590 L756.700 585.500 L753.300 638.300 Z" fill="#bdbfc6"/>
<path d="M760 587 L792 584 L799 596 L802.500 643.300 L756.700 640 Z" fill="#cfd1d6"/>
<path d="M770 618 L790 616 L788 641 L766 640 Z" fill="#a8bce6"/>
<path d="M712 634 L726 598 L732 590 L756.700 585.500 L753.300 638.300 Z M760 587 L792 584 L799 596 L802.500 643.300 L756.700 640 Z" fill="none" stroke="#48505e" stroke-width="2"/>
<path d="M726.500 598 L724 635 M792 590 L786.700 641.700" stroke="#3a4664" stroke-width="1.500"/>
<path d="M758.500 585.500 L755 640" stroke="#0a3080" stroke-width="3.500"/>
<path d="M805 588 L813 645" stroke="#0840b8" stroke-width="9"/><path d="M800 588 L807 645 M810 589 L819 644" stroke="#5a647c" stroke-width="1.300"/>
<!-- belt & strips -->
<g fill="none" stroke="#7c8490" stroke-width="1.500">
<path d="M706.700 638.300 L753.300 645 L806.700 653.300"/>
<path d="M763.300 670.800 L800 676.700 L806.700 680 L906 701.700 L960 712"/>
<path d="M746.700 646.700 L743.300 676.700 L741.700 701.700 L746.700 730" stroke="#4a5674"/>
<path d="M810 653.300 L803.300 666.700 L800 693.300 L800 718.300 L805 751.700 L810 766.700" stroke="#8a94a8"/>
<path d="M698.300 655 L697 690" stroke="#1a2a60"/>
<path d="M740 730 L783.300 746 L806 760" stroke="#4a5a90" stroke-width="1.200"/>
<path d="M830 775.800 L829 760 L830.800 743.300 L835 730 L841.700 720 L851.700 715 L866.700 717.500 L876.700 725 L886.700 740 L896.700 756.700 L915 781.700 L928.300 796.700" stroke="#a4b0d4" stroke-width="2.400" stroke-dasharray="2.500 1.200"/>
<path d="M890 656.700 L940 675 L973 691.700 L981.700 705" stroke="#98a0b0"/>
<path d="M900 641.700 L940 660 L973.300 690" stroke="#98a0b0" stroke-width="1.200"/>
<path d="M983 695 L1006.700 698.300 L1056.700 691.700 L1098.300 683.300 L1118.300 680" stroke="#a8b0c0" stroke-width="2"/>
<path d="M1090 660 L1112 676 L1120 690" stroke="#98a0b0" stroke-width="1.200"/>
</g>
<g stroke-dasharray="6 4 2 7 10 3 3 8" opacity=".6" fill="none" stroke="#e6eaf2" stroke-width="1.500">
<path d="M706.700 638.300 L753.300 645 L806.700 653.300"/>
<path d="M763.300 670.800 L800 676.700 L806.700 680 L906 701.700 L960 712"/>
<path d="M746.700 646.700 L743.300 676.700 L741.700 701.700 L746.700 730" stroke="#e6eaf2"/>
<path d="M810 653.300 L803.300 666.700 L800 693.300 L800 718.300 L805 751.700 L810 766.700" stroke="#e6eaf2"/>
<path d="M698.300 655 L697 690" stroke="#e6eaf2"/>
<path d="M740 730 L783.300 746 L806 760" stroke="#e6eaf2" stroke-width="1.200"/>
<path d="M830 775.800 L829 760 L830.800 743.300 L835 730 L841.700 720 L851.700 715 L866.700 717.500 L876.700 725 L886.700 740 L896.700 756.700 L915 781.700 L928.300 796.700" stroke="#e6eaf2" stroke-width="2.400" />
<path d="M890 656.700 L940 675 L973 691.700 L981.700 705" stroke="#e6eaf2"/>
<path d="M900 641.700 L940 660 L973.300 690" stroke="#e6eaf2" stroke-width="1.200"/>
<path d="M983 695 L1006.700 698.300 L1056.700 691.700 L1098.300 683.300 L1118.300 680" stroke="#e6eaf2" stroke-width="2"/>
<path d="M1090 660 L1112 676 L1120 690" stroke="#e6eaf2" stroke-width="1.200"/>
</g>
<rect x="749" y="655" width="9.300" height="10" fill="#8a9098" stroke="#c8ccd4" stroke-width=".8"/>
<path d="M810 688.300 L830.800 692 L830.800 699 L810 695 Z" fill="#9aa0a8" stroke="#4a5060" stroke-width=".8"/>
<!-- front face: headlight frames, grille -->
<path d="M950 715 L990 708.300 L1098.300 692 L1124 688 L1132 692 L1130 712 L1124 730 L1100 735 L993.300 750 L956 752 L948 745 Z" fill="#6c6c6c"/>
<path d="M991.700 710 L1098.300 695 L1100 726.700 L993.300 741.700 Z" fill="url(#c4grille)"/>
<g stroke="#2e2e2e" stroke-width="2.200" fill="none"><path d="M999 716 L1095 702 M999 724 L1096 710 M999 732 L1097 718"/></g>
<g stroke="#a4a4a4" stroke-width="1.200" fill="none"><path d="M996 720 L1097 706 M996 728 L1098 714 M996 737 L1099 722"/><path d="M1024 705 L1026 738 M1076 698 L1078 730" stroke="#303030" stroke-width="2"/></g>
<path d="M954 718.300 L985 715.800 L985.800 741.700 L955 745 Z" fill="#f6f6f6" stroke="#a0a0a0" stroke-width="1.500"/>
<path d="M1100 698.300 L1121.700 693.300 L1121.700 713.300 L1100.800 718.300 Z" fill="#e0e0e0" stroke="#909090" stroke-width="1.500"/>
<path d="M1047.500 708 L1058.300 706.700 L1058.300 717 L1053 722 L1047.500 718 Z" fill="#d81818" stroke="#f0f0f0" stroke-width="1"/><path d="M1053 709 V719 M1050 713 H1056" stroke="#fff" stroke-width=".8"/>
<!-- chrome strip under grille -->
<path d="M956.700 748.300 L1000 745 L1060 736 L1123.300 726 L1122 733 L1060 743 L1000 752 L958 756 Z" fill="#8c8c8c"/>
<!-- indicator -->
<path d="M931.700 760 L976.700 757 L976.700 772 L935 775 Z" fill="#6a6a6a"/><path d="M952 760 L975 758.500 L975 770 L953 772 Z" fill="#ececec"/><path d="M938 762 L950 761 L950 772 L940 773 Z" fill="#2a2a2a"/>
<!-- bumper -->
<path d="M920 773.300 L956.700 776.700 L1006.700 766.700 L1056.700 755 L1121.700 736.700 L1123.300 743.300 L1108.300 755 L1073.300 766.700 L1023.300 778.300 L990 788.300 L938.300 790 L921.700 781.700 Z" fill="url(#c4bump)"/>
<path d="M920 773.300 L956.700 776.700 L1006.700 766.700 L1056.700 755 L1121.700 736.700" fill="none" stroke="#787878" stroke-width="1.200"/>
<path d="M960 782 L1000 776 L1040 766 L1090 750" stroke="#3a62d8" stroke-width="2" fill="none" opacity=".7"/>
<path d="M1003 757 L1008 757 L1003 788 L997 789 Z" fill="#c8c8c8" stroke="#606060" stroke-width=".8"/>
<path d="M1091 738.500 L1096.700 738 L1094 760 L1088.300 761 Z" fill="#c8c8c8" stroke="#606060" stroke-width=".8"/>
</svg>
<!-- right panel -->
<div class="abs" style="left:1173px;top:70px;width:107px;height:1px;background:#aca899"></div>
<div class="abs" style="left:1173px;top:71px;width:107px;height:1px;background:#fff"></div>
<div class="btn" style="left:1174px;top:73px;width:15px;height:15px;background:#ece9d8"><svg class="abs" style="left:0;top:0" width="13" height="13"><path d="M5 3.5 L2 6.5 L5 9.5 M8 3.5 L11 6.5 L8 9.5" stroke="#000" stroke-width="1" fill="none"/></svg></div>
<div class="abs" style="left:1194px;top:75px;width:79px;height:12px;background:#e0dfe6;border-right:1px solid #aca899;border-bottom:1px solid #aca899;box-sizing:border-box"><svg class="abs" style="left:28px;top:1px" width="22" height="10"><path d="M1 6 L11 1.5 L21 6 M1 9 L11 4.5 L21 9" stroke="#000" stroke-width="1" fill="none"/></svg></div>
<div class="pitem" style="top:92px">Create...</div>
<div class="pitem" style="top:108px">Modify...</div>
<div class="pitem" style="top:124px">Surface...</div>
<div class="pitem" style="top:140px">Select...</div>
<div class="pitem" style="top:156px">Display...</div>
<div class="abs" style="left:1187px;top:461px;width:80px;height:12px;background:#e0dfe6;border-right:1px solid #aca899;border-bottom:1px solid #aca899;box-sizing:border-box"><svg class="abs" style="left:29px;top:1px" width="22" height="10"><path d="M1 1 L11 5.5 L21 1 M1 4 L11 8.5 L21 4" stroke="#000" stroke-width="1" fill="none"/></svg></div>
<div class="btn" style="left:1174px;top:476px;width:33px">EXT</div>
<div class="btn" style="left:1209px;top:476px;width:34px">SEL</div>
<div class="btn" style="left:1245px;top:476px;width:33px">MUL</div>
<div class="abs" style="left:1173px;top:495px;width:106px;height:1px;background:#fff"></div>
<div class="abs" style="left:1174px;top:498px;width:105px;height:172px;background:#316ac5;border:1px solid #000;box-sizing:border-box;overflow:hidden">
<div class="li" style="top:2px">:HRFW</div><div class="li" style="top:15px">:HLFW</div><div class="li" style="top:28px">:HRRW</div><div class="li" style="top:41px">:HLRW</div><div class="li" style="top:54px">Front</div><div class="li" style="top:67px">Back</div><div class="li" style="top:80px">Hood</div><div class="li" style="top:93px">Roof</div><div class="li" style="top:106px">Trunk</div><div class="li" style="top:119px">SideL</div><div class="li" style="top:132px">SideR</div><div class="li" style="top:145px">FRWind</div><div class="li" style="top:158px">RRWind</div>
<div class="abs" style="left:86px;top:0;width:17px;height:170px;background:#f3f1ec"></div>
<div class="abs" style="left:87px;top:1px;width:15px;height:15px;border-radius:2px;background:linear-gradient(90deg,#c9d8fc,#b7cafa);border:1px solid #fff;box-sizing:border-box;box-shadow:0 0 0 1px #9db1e6 inset"><svg class="abs" style="left:0;top:0" width="13" height="13"><path d="M3 8 L6.5 4.5 L10 8" stroke="#4d6185" stroke-width="2" fill="none"/></svg></div>
<div class="abs" style="left:87px;top:153px;width:15px;height:15px;border-radius:2px;background:linear-gradient(90deg,#c9d8fc,#b7cafa);border:1px solid #fff;box-sizing:border-box;box-shadow:0 0 0 1px #9db1e6 inset"><svg class="abs" style="left:0;top:0" width="13" height="13"><path d="M3 5 L6.5 8.5 L10 5" stroke="#4d6185" stroke-width="2" fill="none"/></svg></div>
<div class="abs" style="left:87px;top:125px;width:15px;height:26px;border-radius:2px;background:linear-gradient(90deg,#c9d8fc,#b7cafa);border:1px solid #fff;box-sizing:border-box;box-shadow:0 0 0 1px #9db1e6 inset"><div class="abs" style="left:4px;top:9px;width:6px;height:1px;background:#eef4fe;box-shadow:0 2px 0 #eef4fe,0 4px 0 #eef4fe,0 6px 0 #eef4fe,1px 1px 0 #8cb0f8,1px 3px 0 #8cb0f8,1px 5px 0 #8cb0f8,1px 7px 0 #8cb0f8"></div></div>
</div>
<div class="btn2" style="left:1174px;top:672px;width:53px">Hide All</div>
<div class="btn2" style="left:1228px;top:672px;width:51px">Show All</div>
<div class="btn2" style="left:1174px;top:688px;width:53px">Select All</div>
<div class="btn2" style="left:1228px;top:688px;width:51px">Deselect</div>
<!-- taskbar -->
<div id="task">
<div class="abs" style="left:0;top:0;width:95px;height:30px;border-radius:0 12px 12px 0/0 15px 15px 0;background:linear-gradient(180deg,#2f7f2f 0%,#5bb55b 8%,#46a346 18%,#3c9a3c 35%,#379537 60%,#3a9a3a 80%,#2f832f 92%,#256b25 100%);box-shadow:inset -3px 0 4px rgba(0,40,0,.45),2px 0 3px rgba(0,0,80,.4)">
<svg class="abs" style="left:10px;top:6px" width="22" height="20" viewBox="0 0 22 20"><path d="M3 1.5 Q6.5 0 10 1.8 L9 8.5 Q5.5 6.8 2 8.2 Z" fill="#e8622c"/><path d="M11.5 2.5 Q15 4.2 18.5 2.6 L17.5 9.4 Q14 11 10.5 9.2 Z" fill="#7cc43a"/><path d="M1.7 9.8 Q5.2 8.4 8.7 10.2 L7.7 17 Q4.2 15.3 0.7 16.7 Z" fill="#4a7be0"/><path d="M10.2 10.9 Q13.7 12.6 17.2 11 L16.2 17.8 Q12.7 19.4 9.2 17.7 Z" fill="#f2c01c"/></svg>
<div class="abs" style="left:34px;top:3px;font-size:20px;line-height:22px;font-weight:bold;font-style:italic;color:#fff;text-shadow:1px 1px 2px #1a4a1a;transform:scaleX(.8);transform-origin:0 0">пуск</div>
</div>
<!-- quick launch -->
<svg class="abs" style="left:106px;top:6px" width="66" height="18" viewBox="0 0 66 18">
<g><rect x="2" y="2" width="12" height="13" rx="3" fill="#e8f0fa" stroke="#2b4f9a" stroke-width="1"/><path d="M5 9 Q5 5 9 5 M5 9 Q5 12 9 12" stroke="#1d3f80" stroke-width="1.6" fill="none"/><path d="M8 9 L13 5 L12 10 Z" fill="#1d3f80"/></g>
<g><circle cx="33" cy="9" r="5.5" fill="none" stroke="#7cc0f5" stroke-width="3"/><path d="M29 9 H37" stroke="#7cc0f5" stroke-width="2"/><path d="M26 13 Q32 0 41 3" stroke="#f0d060" stroke-width="1.5" fill="none"/></g>
<g transform="translate(56 9) rotate(-40)"><rect x="-8" y="-4" width="16" height="8" rx="3" fill="#e9a13a" stroke="#8a5a18" stroke-width="1"/><path d="M-5 -1 H5 M-5 2 H5" stroke="#fff3c8" stroke-width="1.3"/></g>
</svg>
<div class="tb" style="left:181px"><svg class="abs" style="left:8px;top:3px" width="17" height="17"><rect width="17" height="17" fill="#ffe000"/><rect x="1" y="1" width="15" height="7" fill="#ffe000"/><path d="M3 3 L5 2 V7 M12 3 Q8 1 8 5 Q8 8 12 7 H15" stroke="#d81818" stroke-width="1.8" fill="none"/><path d="M3 10 L5 15 L7 10 M11 12.5 a1.6 1.4 0 1 0 0.01 0 M11 12.5 a1.4 1.2 0 1 1 0.01 0" stroke="#d81818" stroke-width="1" fill="none"/></svg><span>1С:Предприятие ...</span></div>
<div class="tb" style="left:327px"><svg class="abs" style="left:9px;top:3px" width="17" height="17"><rect width="17" height="17" fill="#dcdcdc" stroke="#555" stroke-width="1"/><path d="M8 2 L10 2 L10 5 L14 6 L14 8 L10 8 L12 15 L10 15 L8 10 L5 15 L3 15 L6 8 L5 5 Z" fill="#111"/></svg><span>Counter-Strike</span></div>
<div class="tb" style="left:474px"><svg class="abs" style="left:8px;top:4px" width="18" height="15"><path d="M1 3 H6 L8 5 H15 V13 H1 Z" fill="#f5d56a" stroke="#9a7a1c" stroke-width="1"/><path d="M1 13 L4 7 H17 L15 13 Z" fill="#fbe89a" stroke="#9a7a1c" stroke-width="1"/></svg><span>D:\Новая папка\m...</span></div>
<div class="tb act" style="left:621px"><svg class="abs" style="left:9px;top:5px" width="17" height="14" viewBox="0 0 17 14"><g fill="#0000c8"><rect x="1" y="2" width="6" height="3"/><rect x="1" y="4" width="3" height="4"/><rect x="2" y="7" width="5" height="3"/><ellipse cx="11.5" cy="6.5" rx="4.5" ry="4"/></g><g fill="#dfe6ff"><rect x="0" y="1" width="2" height="2"/><rect x="4" y="1" width="2" height="1"/><rect x="0" y="6" width="1" height="2"/><rect x="8" y="2" width="3" height="1"/><rect x="9" y="5" width="3" height="1"/><rect x="4" y="5" width="2" height="1"/></g></svg><span>m2140.z3d - Zano...</span></div>
<div class="tb" style="left:768px"><svg class="abs" style="left:9px;top:2px" width="16" height="19"><path d="M3 6 L5 15 H11 L13 6 Z" fill="#d8d0b0" stroke="#7a7458" stroke-width="1"/><path d="M5 2 L7 12 M8 1 L8 12 M11 2 L9 12" stroke="#e8a030" stroke-width="1.6"/><path d="M4 4 L6 11" stroke="#b04040" stroke-width="1.4"/><rect x="5" y="12" width="6" height="4" fill="#6a8a4a"/></svg><span>full.bmp - Paint</span></div>
<div class="tb" style="left:915px"><svg class="abs" style="left:8px;top:3px" width="18" height="17"><path d="M1 8 L9 2 L17 8 V16 H1 Z" fill="#fff" stroke="#333" stroke-width="1"/><path d="M1 16 L9 9 L17 16" fill="none" stroke="#333" stroke-width="1"/><path d="M5 4 L10 0 L14 4 L9 8 Z" fill="#f5e040" stroke="#a89010" stroke-width=".8"/></svg><span>Mail.Ru Агент (1 в...</span></div>
<div class="abs" style="left:1072px;top:9px;color:#fff;font-size:11px;line-height:13px">EN</div>
<!-- tray -->
<div class="abs" style="left:1098px;top:0;width:182px;height:30px;background:linear-gradient(180deg,#0c5bc8 0%,#1f9cf0 5%,#1795ea 12%,#128de4 25%,#0f8ae2 60%,#1290e8 85%,#0e7ad0 95%,#0a5fb0 100%);box-shadow:inset 1px 0 0 #0a3f9a,inset 2px 0 0 #3fb0ff"></div>
<svg class="abs" style="left:1104px;top:5px" width="130" height="20" viewBox="0 0 130 20">
<path d="M5 4 l4 -2 l1 3 l-4 2z" fill="#e08030"/><path d="M8 7 l8 8" stroke="#c8c8c8" stroke-width="2"/><ellipse cx="15" cy="14" rx="3" ry="2.4" fill="#eee" stroke="#888" stroke-width=".6"/>
<rect x="27" y="2" width="9" height="8" fill="#405898" stroke="#c0c8e0" stroke-width="1"/><rect x="22" y="7" width="9" height="8" fill="#506ab0" stroke="#c0c8e0" stroke-width="1"/>
<circle cx="50" cy="8" r="5.5" fill="#909090" stroke="#404040" stroke-width="1"/><circle cx="49" cy="7" r="2" fill="#d0d0d0"/><path d="M54 14 l4 -5" stroke="#6080d0" stroke-width="1.5"/>
<rect x="59.5" y="2.500" width="13" height="13" fill="#3080c8" stroke="#d8e8f8" stroke-width="1"/><circle cx="66" cy="9" r="3" fill="#60b0e8"/><path d="M66 4v10M61 9h10" stroke="#a0d0f0" stroke-width=".7"/>
<rect x="79" y="2" width="6" height="5" fill="#e8c080"/><rect x="77" y="7" width="10" height="7" fill="#30a040"/><rect x="79" y="14" width="2.500" height="4" fill="#204080"/><rect x="82.500" y="14" width="2.500" height="4" fill="#204080"/>
<rect x="94" y="3" width="15" height="13" fill="#283848" stroke="#8090a0" stroke-width="1"/><path d="M96 12 l4 -4 l3 2 l4 -4" stroke="#fff" stroke-width="1.5" fill="none"/>
<path d="M114 3 h10 q4 0 4 4 v5 q0 5 -5 5 h-9 z" fill="#a0e060" stroke="#e8ffd0" stroke-width="1"/><circle cx="121" cy="10" r="3.5" fill="#308020"/><circle cx="121" cy="10" r="1.3" fill="#c0f090"/>
</svg>
<div class="abs" style="left:1238px;top:9px;color:#fff;font-size:11px;line-height:13px">17:33</div>
</div>
</div>
</body></html>
